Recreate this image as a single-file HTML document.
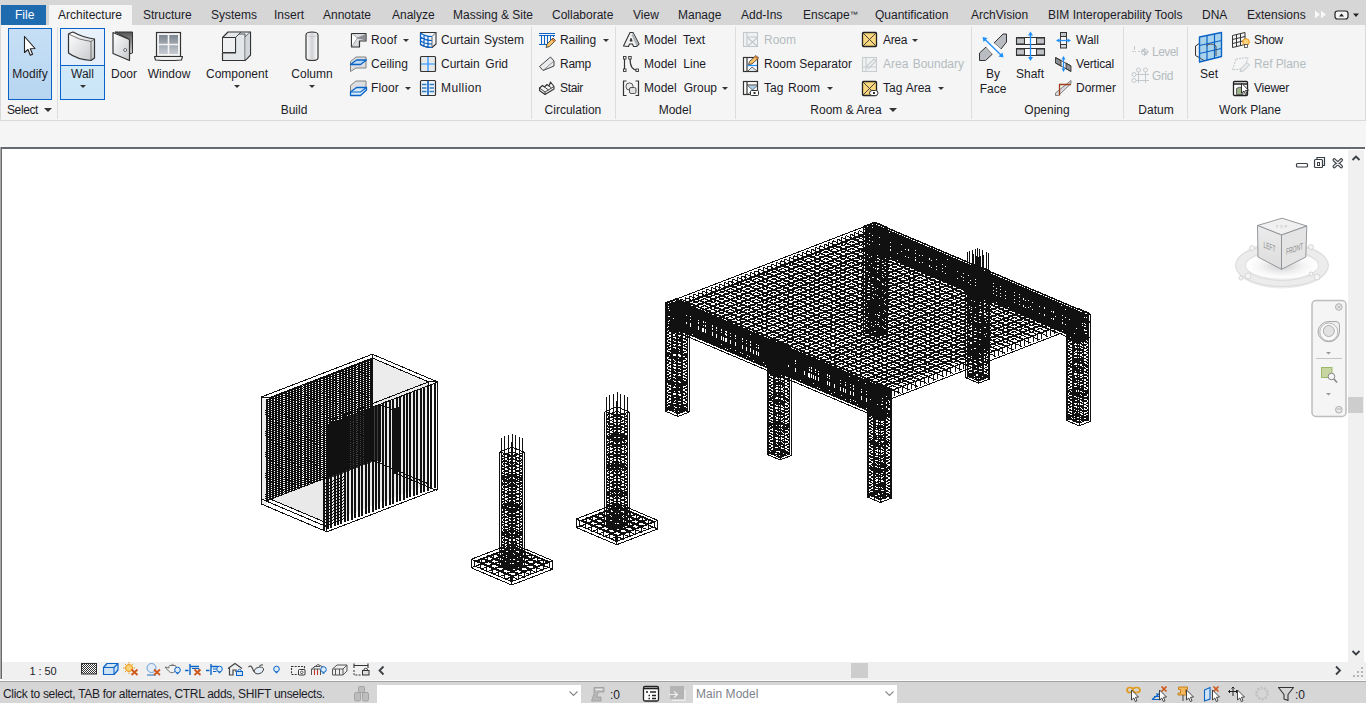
<!DOCTYPE html>
<html><head><meta charset="utf-8"><title>Revit</title>
<style>
*{box-sizing:border-box;margin:0;padding:0}
html,body{width:1366px;height:703px;overflow:hidden}
body{position:relative;background:#f5f5f5;font-family:"Liberation Sans",sans-serif;font-size:12px;color:#1c1c28}
.abs{position:absolute}
#tabs{position:absolute;left:0;top:0;width:1366px;height:25px;background:#d6d6d6}
#tabs span{position:absolute;top:5px;height:20px;line-height:20px;white-space:nowrap}
#ribbon{position:absolute;left:0;top:25px;width:1366px;height:96px;background:#f5f5f5;border-bottom:1px solid #dadada;border-right:1px solid #dadada;border-left:1px solid #dadada}
.t{position:absolute;white-space:nowrap;line-height:14px;height:14px}
.c{text-align:center}
.dis{color:#b4bcc0}
.sep{position:absolute;top:27px;width:1px;height:92px;background:#dddddd}
.arr{position:absolute;width:0;height:0;border-left:3px solid transparent;border-right:3px solid transparent;border-top:3px solid #333}
svg{position:absolute;overflow:visible}
#view{position:absolute;left:0;top:147px;width:1366px;height:533px;background:#fff}
#status{position:absolute;left:0;top:682px;width:1366px;height:21px;background:#d6d6d6}
</style></head><body>
<!--TABS-->
<div id="tabs">
<div class="abs" style="left:1px;top:5px;width:45px;height:20px;background:#1e6bb0"></div>
<div class="abs" style="left:49px;top:5px;width:83px;height:20px;background:#f5f5f5"></div>
<span style="left:15px;color:#fff">File</span>
<span style="left:58px">Architecture</span>
<span style="left:143px">Structure</span>
<span style="left:211px">Systems</span>
<span style="left:274px">Insert</span>
<span style="left:323px">Annotate</span>
<span style="left:392px">Analyze</span>
<span style="left:453px">Massing &amp; Site</span>
<span style="left:552px">Collaborate</span>
<span style="left:633px">View</span>
<span style="left:678px">Manage</span>
<span style="left:741px">Add-Ins</span>
<span style="left:803px">Enscape<span style="position:relative;top:-2px;left:0;height:auto;line-height:1;font-size:8px">™</span></span>
<span style="left:875px">Quantification</span>
<span style="left:971px">ArchVision</span>
<span style="left:1048px">BIM Interoperability Tools</span>
<span style="left:1202px">DNA</span>
<span style="left:1247px">Extensions</span>
</div>
<!--RIBBON-->
<div id="ribbon"></div>
<div class="abs" style="left:8px;top:28px;width:44px;height:72px;border:1px solid #0a64c8;background:linear-gradient(#c6dff5,#b7d5f1)"></div>
<div class="abs" style="left:60px;top:28px;width:45px;height:72px;border:1px solid #0a64c8;background:linear-gradient(#e9f2fb 0,#e3eefa 36px,#0a64c8 36px,#0a64c8 37px,#cfe9f9 37px,#cbe6f8 100%)"></div>
<div class="t " style="left:12.3px;top:67px">Modify</div>
<div class="t " style="left:71.0px;top:67px">Wall</div>
<div class="arr" style="left:80px;top:85px"></div>
<div class="t " style="left:111.0px;top:67px">Door</div>
<div class="t " style="left:147.7px;top:67px">Window</div>
<div class="t " style="left:206.0px;top:67px">Component</div>
<div class="arr" style="left:234px;top:85px"></div>
<div class="t " style="left:291.3px;top:67px">Column</div>
<div class="arr" style="left:309px;top:85px"></div>
<div class="t " style="left:371px;top:33px;letter-spacing:0.16px;">Roof</div>
<div class="arr" style="left:403px;top:39px"></div>
<div class="t " style="left:371px;top:57px;letter-spacing:0.04px;">Ceiling</div>
<div class="t " style="left:371px;top:81px;letter-spacing:0.13px;">Floor</div>
<div class="arr" style="left:405px;top:87px"></div>
<div class="t " style="left:441px;top:33px;word-spacing:0.98px;">Curtain System</div>
<div class="t " style="left:441px;top:57px;word-spacing:2.31px;">Curtain Grid</div>
<div class="t " style="left:441px;top:81px;letter-spacing:0.42px;">Mullion</div>
<div class="sep" style="left:531px"></div>
<div class="t " style="left:560px;top:33px;letter-spacing:-0.10px;">Railing</div>
<div class="arr" style="left:603px;top:39px"></div>
<div class="t " style="left:560px;top:57px;letter-spacing:-0.25px;">Ramp</div>
<div class="t " style="left:560px;top:81px;letter-spacing:-0.33px;">Stair</div>
<div class="t " style="left:544.6px;top:103px">Circulation</div>
<div class="sep" style="left:615px"></div>
<div class="t " style="left:644px;top:33px;word-spacing:3.20px;">Model Text</div>
<div class="t " style="left:644px;top:57px;word-spacing:3.30px;">Model Line</div>
<div class="t " style="left:644px;top:81px;word-spacing:3.64px;">Model Group</div>
<div class="arr" style="left:722px;top:87px"></div>
<div class="t " style="left:658.7px;top:103px">Model</div>
<div class="sep" style="left:735px"></div>
<div class="t dis" style="left:764px;top:33px;letter-spacing:-0.00px;">Room</div>
<div class="t " style="left:764px;top:57px;letter-spacing:-0.00px;">Room Separator</div>
<div class="t " style="left:764px;top:81px;word-spacing:1.31px;">Tag Room</div>
<div class="arr" style="left:827px;top:87px"></div>
<div class="t " style="left:883px;top:33px;letter-spacing:-0.34px;">Area</div>
<div class="arr" style="left:912px;top:39px"></div>
<div class="t dis" style="left:883px;top:57px;word-spacing:0.97px;">Area Boundary</div>
<div class="t " style="left:883px;top:81px;word-spacing:0.64px;">Tag Area</div>
<div class="arr" style="left:938px;top:87px"></div>
<div class="t " style="left:810.3px;top:103px">Room &amp; Area</div>
<div class="arr" style="left:889px;top:108px;border-left-width:4px;border-right-width:4px;border-top-width:4px"></div>
<div class="sep" style="left:971px"></div>
<div class="t " style="left:986.0px;top:67px">By</div>
<div class="t " style="left:979.7px;top:82px">Face</div>
<div class="t " style="left:1016.0px;top:67px">Shaft</div>
<div class="t " style="left:1076px;top:33px;letter-spacing:0.02px;">Wall</div>
<div class="t " style="left:1076px;top:57px;letter-spacing:-0.17px;">Vertical</div>
<div class="t " style="left:1076px;top:81px;letter-spacing:-0.00px;">Dormer</div>
<div class="t " style="left:1024.3px;top:103px">Opening</div>
<div class="sep" style="left:1123px"></div>
<div class="t dis" style="left:1152px;top:45px;letter-spacing:-0.54px;">Level</div>
<div class="t dis" style="left:1152px;top:69px;letter-spacing:-0.42px;">Grid</div>
<div class="t " style="left:1138.3px;top:103px">Datum</div>
<div class="sep" style="left:1187px"></div>
<div class="t " style="left:1200.0px;top:67px">Set</div>
<div class="t " style="left:1254px;top:33px;letter-spacing:-0.25px;">Show</div>
<div class="t dis" style="left:1254px;top:57px;letter-spacing:-0.08px;">Ref Plane</div>
<div class="t " style="left:1254px;top:81px;letter-spacing:-0.24px;">Viewer</div>
<div class="t " style="left:1219.1px;top:103px">Work Plane</div>
<div class="t " style="left:7px;top:103px;letter-spacing:-0.39px;">Select</div>
<div class="arr" style="left:44px;top:108px;border-left-width:4px;border-right-width:4px;border-top-width:4px"></div>
<div class="t " style="left:280.7px;top:103px">Build</div>
<div class="sep" style="left:57px"></div>
<svg width="1366" height="121" viewBox="0 0 1366 121" style="left:0;top:0">
<defs>
<linearGradient id="gv" x1="0" y1="0" x2="0" y2="1"><stop offset="0" stop-color="#fff"/><stop offset="1" stop-color="#c9ccd0"/></linearGradient>
<linearGradient id="gh" x1="0" y1="0" x2="1" y2="0"><stop offset="0" stop-color="#fff"/><stop offset="0.5" stop-color="#d0d2d5"/><stop offset="1" stop-color="#fff"/></linearGradient>
<linearGradient id="gd" x1="0" y1="0" x2="1" y2="1"><stop offset="0" stop-color="#fff"/><stop offset="1" stop-color="#c5c8cc"/></linearGradient>
<linearGradient id="gdark" x1="0" y1="0" x2="0" y2="1"><stop offset="0" stop-color="#555"/><stop offset="1" stop-color="#d8d8d8"/></linearGradient>
<linearGradient id="gwin" x1="0" y1="0" x2="0" y2="1"><stop offset="0" stop-color="#7d8690"/><stop offset="1" stop-color="#c6cbd1"/></linearGradient>
</defs>
<!-- cursor -->
<path d="M24.5 36.5 L24.5 52.5 L28 49.5 L30.3 55.3 L32.6 54.3 L30.3 48.7 L35 48.5 Z" fill="#fff" stroke="#222" stroke-width="1.1" stroke-linejoin="round"/>
<!-- wall -->
<path d="M68.5 34 Q71 32.5 73 32 Q83 37.5 94.5 39 L94.5 58 L91 60.5 Q77 59.5 68.5 53 Z" fill="url(#gd)" stroke="#333" stroke-width="1.2" stroke-linejoin="round"/>
<path d="M68.5 34 Q80 40.5 91 41.5 L91 60.5 M91 41.5 L94.5 39" fill="none" stroke="#555" stroke-width="0.8"/>
<!-- door -->
<path d="M115 32 L132.5 32 L132.5 53 L129 54 L129 39 Z" fill="url(#gdark)" stroke="#333" stroke-width="1"/>
<path d="M113 32.5 L129.5 39.5 L129.5 60.5 L113 53.5 Z" fill="url(#gd)" stroke="#333" stroke-width="1.2" stroke-linejoin="round"/>
<circle cx="125.2" cy="50" r="1.5" fill="#fff" stroke="#444" stroke-width="0.8"/>
<!-- window -->
<rect x="156.5" y="32.5" width="24" height="24" fill="#f4f4f4" stroke="#333" stroke-width="1.2"/>
<rect x="159" y="35" width="19" height="19" fill="url(#gwin)"/>
<path d="M168.5 35 V54 M159 44.5 H178" stroke="#f4f4f4" stroke-width="1.6"/>
<path d="M154.5 56.5 H182.500 L181.5 60 Q168 61 155.5 60 Z" fill="#eee" stroke="#333" stroke-width="1.1" stroke-linejoin="round"/>
<!-- component -->
<path d="M222.500 37.500 L228 32 L250.500 32 L250.500 55 L245 60.500 L222.500 60.500 L222.500 53 L235.500 53 L235.500 37.500 Z" fill="#e4e7ea" stroke="#333" stroke-width="1.2" stroke-linejoin="round"/>
<path d="M222.500 37.500 H235.500 L241 32 M235.500 37.500 L239 34 L245 34 L245 60.500 M245 37 L250.500 32 M222.500 50 H233.500 V37.500" fill="none" stroke="#444" stroke-width="0.9"/>
<rect x="223" y="38" width="12" height="12" fill="#f3f4f5"/>
<path d="M222.500 37.500 H235.500 V52.500 H222.500 Z" fill="#eef0f2" stroke="#333" stroke-width="1"/>
<path d="M245.500 37 L250 32.700 V54.500 L245.500 59.500 Z" fill="#d3d6da"/>
<!-- column -->
<path d="M306 35 Q306 32 312 32 Q318 32 318 35 V58 Q318 60.500 312 60.500 Q306 60.500 306 58 Z" fill="url(#gh)" stroke="#333" stroke-width="1.2"/>
<path d="M306.5 35.500 Q312 38.500 317.500 35.500" fill="none" stroke="#bbb" stroke-width="0.7"/>
<!-- roof -->
<path d="M351.500 33.500 H366 V41 H359.500 V47 H351.500 Z" fill="#d9dbde" stroke="#333" stroke-width="1.2" stroke-linejoin="round"/>
<path d="M351.500 33.500 L357 38 H366 M357 38 L351.500 47" fill="none" stroke="#666" stroke-width="0.8"/>
<path d="M352 34 L357 38 L352 46 Z" fill="#fff"/><path d="M357 38 L365.500 34 V40.500 Z" fill="#8a8e93"/>
<!-- ceiling -->
<path d="M350.500 61.500 L356 57 H366 V68 H356 L350.500 71.500 Z" fill="#dcdee1" stroke="#777" stroke-width="0.9" stroke-linejoin="round"/>
<path d="M350.500 64.500 L356.500 60 H366.500 L360.500 64.500 Z" fill="#bcd9f3" stroke="#0a64c8" stroke-width="1.3" stroke-linejoin="round"/>
<!-- floor -->
<path d="M350.500 85.500 L356 81 H366 V90 L360 95.500 H350.500 Z" fill="#dcdee1" stroke="#777" stroke-width="0.9" stroke-linejoin="round"/>
<path d="M350.500 92 L356.500 87.500 H366.500 V90 L360.500 95.500 H350.500 Z" fill="#d6e9f8" stroke="#0a64c8" stroke-width="1.3" stroke-linejoin="round"/>
<path d="M350.500 92 H360.500 L366.500 87.500" fill="none" stroke="#0a64c8" stroke-width="1.1"/>
<!-- curtain system -->
<path d="M420.500 32.500 H436 V44 L432 47.500 Q425 47.500 420.500 44.500 Z" fill="#f1f4f7" stroke="#333" stroke-width="1.1" stroke-linejoin="round"/>
<path d="M432 36.500 L436 32.500 M432 36.500 V47.500" stroke="#555" stroke-width="0.9" fill="none"/>
<path d="M420.500 33 Q425 36.500 432 36.500 M420.500 37 Q425 40.500 432 40.500 M420.500 41 Q425 44 432 44 M424 34.500 V46.500 M428 36 V47.500 M420.500 33 V44.500 Q425 47.500 432 47.500" stroke="#0a64c8" stroke-width="1.2" fill="none"/>
<!-- curtain grid -->
<rect x="420.500" y="56.500" width="15" height="15" rx="1" fill="#e6e8ea" stroke="#333" stroke-width="1.2"/>
<path d="M428 57 V71 M421 64 H435" stroke="#1e90ff" stroke-width="1.2"/>
<!-- mullion -->
<rect x="420.500" y="80.500" width="15" height="15" rx="1" fill="#eef1f4" stroke="#333" stroke-width="1.2"/>
<path d="M428 81 V95" stroke="#0a64c8" stroke-width="1.6"/><path d="M422 84.500 H426.500 M429.500 84.500 H434 M422 88 H426.500 M429.500 88 H434 M422 91.500 H426.500 M429.500 91.500 H434" stroke="#2b7fc4" stroke-width="1.5"/>
<!-- railing -->
<path d="M539 33.500 H555 M539 35.500 H555 M539 44.500 H549 M541.500 35.500 V44.500 M544.500 35.500 V44.500 M547.500 35.500 V44.500 M550.500 35.500 V40 M553.500 35.500 V37" stroke="#0a64c8" stroke-width="1" fill="none"/>
<path d="M546 47.500 L547 44 L553 38 L555.500 40.500 L549.500 46.500 Z" fill="#f6c36a" stroke="#333" stroke-width="0.800" stroke-linejoin="round"/>
<path d="M552 39 L554.500 41.500" stroke="#d2691e" stroke-width="1.300"/>
<!-- ramp -->
<path d="M539.500 66.500 L550.500 57 L554 61 V66 L543 70.500 Z" fill="#e9ebed" stroke="#444" stroke-width="1" stroke-linejoin="round"/>
<path d="M543 70.500 L554 61" stroke="#777" stroke-width="0.8"/>
<!-- stair -->
<path d="M539.500 88 L542.500 85.500 L544.500 87 L547 84.500 L549 86 L550.500 82 L554 86.500 V89 L545 94.500 L539.500 90.500 Z" fill="#f4f4f5" stroke="#333" stroke-width="1.100" stroke-linejoin="round"/>
<path d="M539.500 88 L545 92 L554 86.500 M545 92 V94.500 M544.500 87 L548.500 90 M549 86 L551.500 88" stroke="#333" stroke-width="0.900" fill="none"/>
<!-- model text -->
<path d="M623.500 46 L630 32.500 H633 L639 44 L636.500 46.500 H633.500 L632.500 44 H629.500 L628.500 46.500 Z M630.200 41 H632 L631 38.500 Z" fill="#f3f3f3" stroke="#333" stroke-width="1.1" stroke-linejoin="round" fill-rule="evenodd"/>
<path d="M633 33 L638.500 44 L636.500 46 L631.500 35 Z" fill="#aeb3b8"/>
<!-- model line -->
<path d="M624.500 58 V70 M630 58 Q630 70 637 70" stroke="#333" stroke-width="1.2" fill="none"/>
<g fill="#fff" stroke="#333" stroke-width="0.9"><rect x="623.500" y="56.500" width="2.500" height="2.500"/><rect x="623.500" y="69" width="2.500" height="2.500"/><rect x="628.700" y="56.500" width="2.500" height="2.500"/><rect x="636" y="69" width="2.500" height="2.500"/></g>
<!-- model group -->
<path d="M626.500 81 H623.500 V95.500 H626.500 M635.500 81 H638.500 V95.500 H635.500" stroke="#333" stroke-width="1.2" fill="none"/>
<circle cx="629.500" cy="86.500" r="3.600" fill="#ececec" stroke="#444" stroke-width="0.9"/>
<rect x="629.500" y="87.500" width="6.500" height="6" rx="1.500" fill="#e2e2e2" stroke="#444" stroke-width="0.9"/>
<!-- room (disabled) -->
<g stroke="#c3c8cc" fill="none" stroke-width="1.1"><rect x="743.500" y="32.500" width="14" height="14" fill="#f0f1f2"/><path d="M747 33 V46 M747 37 H757.500 M748 38 L757 46 M757 38 L748 46"/></g>
<!-- room separator -->
<rect x="743.500" y="57.500" width="14" height="14" fill="#fff" stroke="#333" stroke-width="1.2"/>
<path d="M747 58 V71" stroke="#333" stroke-width="1.2"/><path d="M747.500 65.500 H757" stroke="#1e90ff" stroke-width="1.3"/>
<path d="M748 71 L752 67 L757 71" fill="#dfe6ec" stroke="#444" stroke-width="0.8"/>
<path d="M748.500 64.500 L749.500 61.500 L756 55.500 L758.500 58 L752 64 Z" fill="#f6c36a" stroke="#333" stroke-width="0.8" stroke-linejoin="round"/><path d="M755.300 56.500 L757.700 59" stroke="#d2691e" stroke-width="1.2"/>
<!-- tag room -->
<rect x="743.500" y="81.500" width="14" height="13" fill="#fff" stroke="#333" stroke-width="1.2"/>
<path d="M747 82 V94 M747 85 H757" stroke="#333" stroke-width="1.2"/><path d="M748 86 H757 L752.500 90.500 Z" fill="#a8d0ee"/><path d="M748 86 L757 94 M757 86 L748 94" stroke="#555" stroke-width="0.7"/>
<rect x="750.500" y="90.500" width="8" height="5" rx="1" fill="#fff" stroke="#333" stroke-width="1"/><rect x="753.500" y="92" width="2" height="2" fill="#333"/>
<!-- area -->
<rect x="862.500" y="32.500" width="14" height="14" rx="1" fill="#f9d77e" stroke="#222" stroke-width="1.3"/><path d="M863 33 L876 46 M876 33 L863 46" stroke="#333" stroke-width="0.9"/>
<!-- area boundary disabled -->
<g stroke="#c9cdd0" fill="none" stroke-width="1.1"><rect x="862.500" y="57.500" width="14" height="14" fill="#f0f1f2"/><path d="M866 58 V71 M863 67 H876 M866 67 L874 59 L876 61 L868 69"/></g>
<!-- tag area -->
<rect x="862.500" y="81.500" width="14" height="14" rx="1" fill="#f9d77e" stroke="#222" stroke-width="1.3"/><path d="M863 82 L876 95 M876 82 L863 95" stroke="#333" stroke-width="0.9"/>
<rect x="869.500" y="90.500" width="8.500" height="5" rx="2.500" fill="#fff" stroke="#333" stroke-width="1"/><rect x="873" y="92" width="2" height="2" fill="#333"/>
<!-- by face -->
<path d="M994 43 L1003 34 H1006.500 V42 L1001 49 Z" fill="#b9bcc0" stroke="#333" stroke-width="1"/>
<path d="M979.500 53 L986 47 L992.500 54 L985.500 60.500 H979.500 Z" fill="#b9bcc0" stroke="#333" stroke-width="1"/>
<path d="M986 47 L994 43 L1001 49 L992.500 54 Z" fill="#fff"/>
<path d="M984 38.500 L1002 56" stroke="#1e90ff" stroke-width="1.3"/><path d="M982.500 37 L987.500 38 L983.500 42 Z M1003.500 57.500 L998.500 56.500 L1002.500 52.500 Z" fill="#1e90ff"/>
<!-- shaft -->
<g fill="#bfc2c6" stroke="#333" stroke-width="1.1"><rect x="1016.500" y="38" width="8" height="6"/><rect x="1036.500" y="38" width="8" height="6"/><rect x="1016.500" y="49" width="8" height="6"/><rect x="1036.500" y="49" width="8" height="6"/></g>
<path d="M1016 37.500 H1045 M1016 44.500 H1045 M1016 48.500 H1045 M1016 55.500 H1045" stroke="#333" stroke-width="1.1"/>
<rect x="1025" y="38.200" width="11" height="5.600" fill="#fff"/><rect x="1025" y="49.200" width="11" height="5.600" fill="#fff"/>
<path d="M1030.500 34 V59" stroke="#1e90ff" stroke-width="1.3"/><path d="M1030.500 31.500 L1033 35.500 H1028 Z M1030.500 61 L1033 57 H1028 Z" fill="#1e90ff"/>
<!-- wall opening -->
<rect x="1060.500" y="32.500" width="6" height="4" fill="#bfc2c6" stroke="#333" stroke-width="1"/><rect x="1060.500" y="44.500" width="6" height="3.500" fill="#d5d7da" stroke="#333" stroke-width="1"/>
<path d="M1060.500 36 V45 M1066.500 36 V45" stroke="#333" stroke-width="0.9"/>
<path d="M1058 40.500 H1069" stroke="#1e90ff" stroke-width="1.2"/><path d="M1056 40.500 L1059.500 38.500 V42.500 Z M1071 40.500 L1067.500 38.500 V42.500 Z" fill="#1e90ff"/>
<!-- vertical -->
<path d="M1055.500 57.500 L1061 60.500 V66 L1055.500 63 Z M1066 63 L1071 66 V71.500 L1066 68.500 Z" fill="#8d9196" stroke="#333" stroke-width="0.9"/>
<path d="M1055.500 57.500 L1071 66 M1055.500 63 L1071 71.500" stroke="#333" stroke-width="0.9"/>
<path d="M1063.500 59 V69" stroke="#1e90ff" stroke-width="1.200"/><path d="M1063.500 56 L1065.500 59.500 H1061.500 Z M1063.500 72 L1065.500 68.500 H1061.500 Z" fill="#1e90ff"/>
<!-- dormer -->
<path d="M1055.500 93 L1071 80.500 V83.500 L1058.500 95.500 H1055.500 Z" fill="#d8dadd" stroke="#666" stroke-width="0.8"/>
<path d="M1059.500 95.500 V84.500 H1071" stroke="#a0401a" stroke-width="1.300" fill="none"/>
<!-- level disabled -->
<g stroke="#c3c8cc" fill="none" stroke-width="1"><path d="M1132 51.500 H1136 M1138 51.500 H1150" stroke-dasharray="2 1"/><circle cx="1144.500" cy="52" r="3"/><path d="M1144.500 48 V56 M1134.500 46 V50"/></g>
<path d="M1141.500 52 A3 3 0 0 1 1144.500 49 V52 Z M1147.500 52 A3 3 0 0 1 1144.500 55 V52 Z" fill="#c3c8cc"/>
<!-- grid disabled -->
<g stroke="#c3c8cc" fill="none" stroke-width="1"><path d="M1138.500 72 V83 M1145.500 72 V83 M1136 74.500 H1149 M1136 80.500 H1149"/><circle cx="1138.500" cy="70" r="2"/><circle cx="1145.500" cy="70" r="2"/><circle cx="1134" cy="74.500" r="2"/><circle cx="1134" cy="80.500" r="2"/></g>
<!-- set -->
<path d="M1195.500 46 L1200 43 V58 L1195.500 55.500 Z" fill="#f0f0f0" stroke="#333" stroke-width="1"/>
<path d="M1199.500 37 L1221.500 32.500 V56.500 L1199.500 62 Z" fill="#a9d3ea" stroke="#0a64c8" stroke-width="1.400" stroke-linejoin="round"/>
<path d="M1199.500 45.500 L1221.500 40.500 M1199.500 53.500 L1221.500 48.500 M1207 35.500 V60 M1214.500 34 V58.500" stroke="#0a64c8" stroke-width="1.200"/>
<path d="M1200 58 L1204 60.500 M1206 46 Q1211 42 1216 46 V56" stroke="#444" stroke-width="0.9" fill="none"/>
<!-- show -->
<path d="M1232.500 35.500 L1245 32.500 V44.500 L1232.500 47.500 Z M1232.500 39.500 L1245 36.500 M1232.500 43.500 L1245 40.500 M1236.500 34.500 V46.500 M1240.500 33.500 V45.500" stroke="#333" stroke-width="1" fill="#f4f4f4"/>
<circle cx="1246" cy="42" r="3.300" fill="#fbd27a" stroke="#e8960c" stroke-width="1"/><rect x="1244.500" y="44.500" width="3" height="3" fill="#fff" stroke="#444" stroke-width="0.800"/>
<!-- ref plane disabled -->
<g stroke="#c3c8cc" fill="none" stroke-width="1"><path d="M1236 59 L1248 57.500 L1244.500 68.500 L1232.500 70 Z" stroke-dasharray="2 1"/><path d="M1240 71.500 L1241 68.500 L1247 62.500 L1249.500 65 L1243.500 71 Z" fill="#e8eaec"/></g>
<!-- viewer -->
<rect x="1233.500" y="81.500" width="14" height="14" rx="1" fill="#fff" stroke="#222" stroke-width="1.300"/><path d="M1234 84 H1247" stroke="#222" stroke-width="1.500"/>
<path d="M1236.500 88.500 Q1239 86.500 1243 87.500 V94.500 H1236.500 Z" fill="#9fb38b" stroke="#444" stroke-width="0.800"/>
<path d="M1241.500 83 V93 L1244 91 L1245.500 94.500 L1247 94 L1245.500 90.500 L1248.500 90.300 Z" fill="#fff" stroke="#222" stroke-width="0.900" stroke-linejoin="round"/>
<!-- tab extras -->
<path d="M1315 10.500 L1320 14.500 L1315 18.500 Z M1321 10.500 L1326 14.500 L1321 18.500 Z" fill="#f8f8f8"/>
<rect x="1335" y="11" width="13" height="8" rx="2.500" fill="#f3f3f3" stroke="#222" stroke-width="1.200"/><path d="M1339 16.500 L1341.500 13.500 L1344 16.500 Z" fill="#222"/>
<path d="M1353 13.500 H1359 L1356 17 Z" fill="#222"/>
</svg>

<!--VIEW-->
<div id="view"></div>
<div class="abs" style="left:0;top:147px;width:1365px;height:2px;background:#666a6e"></div>
<div class="abs" style="left:0;top:147px;width:1px;height:532px;background:#a8a8a8"></div><div class="abs" style="left:1px;top:147px;width:1px;height:532px;background:#666a6e"></div>
<div class="abs" style="left:1348px;top:150px;width:16px;height:512px;background:#f0f0f0"></div>
<div class="abs" style="left:1348px;top:397px;width:15px;height:16px;background:#cdcdcd"></div>
<div class="abs" style="left:2px;top:662px;width:1364px;height:18px;background:#f0f0f0"></div><div class="abs" style="left:0;top:680px;width:1366px;height:1px;background:#fcfcfc"></div>
<div class="abs" style="left:851px;top:663px;width:17px;height:15px;background:#cdcdcd"></div>
<div class="abs" style="left:0;top:681px;width:1366px;height:1px;background:#a2a2a2"></div>
<div class="t" style="left:29.5px;top:664px;font-size:11px;letter-spacing:-0.1px">1 : 50</div>
<svg width="1366" height="703" viewBox="0 0 1366 703" style="left:0;top:0;pointer-events:none">
<defs>
<pattern id="chk" width="2" height="2" patternUnits="userSpaceOnUse"><rect width="1" height="1" fill="#333"/><rect x="1" y="1" width="1" height="1" fill="#333"/></pattern>
<linearGradient id="cubeL" x1="0" y1="0" x2="0" y2="1"><stop offset="0" stop-color="#ececec"/><stop offset="1" stop-color="#dcdcdc"/></linearGradient>
<radialGradient id="shadow"><stop offset="0" stop-color="#c8c8c8"/><stop offset="1" stop-color="#fff" stop-opacity="0"/></radialGradient>
</defs>
<!-- window controls -->
<rect x="1296.500" y="163.500" width="11" height="3.500" rx="1" fill="#fff" stroke="#3a3f45" stroke-width="1.200"/>
<path d="M1317 159.500 V157.500 H1324.500 V165.500 H1322.500" fill="none" stroke="#3a3f45" stroke-width="1.200"/>
<rect x="1314.500" y="159.500" width="8" height="8" rx="1" fill="#fff" stroke="#3a3f45" stroke-width="1.200"/><rect x="1317.500" y="162.500" width="2" height="3" fill="none" stroke="#3a3f45" stroke-width="1"/>
<path d="M1334.300 160 L1341.200 166.500 M1341.200 160 L1334.300 166.500" stroke="#3a3f45" stroke-width="3.600" stroke-linecap="round"/>
<path d="M1334.300 160 L1341.200 166.500 M1341.200 160 L1334.300 166.500" stroke="#e8e8e8" stroke-width="1.400" stroke-linecap="round"/>
<!-- scroll arrows -->
<path d="M1352.500 160 L1356 156.500 L1359.500 160" fill="none" stroke="#3a3f45" stroke-width="1.800"/>
<path d="M1352.500 651 L1356 654.500 L1359.500 651" fill="none" stroke="#3a3f45" stroke-width="1.800"/>
<path d="M383.500 666.500 L379.500 670.500 L383.500 674.500" fill="none" stroke="#3a3f45" stroke-width="1.800"/>
<path d="M1336 666.500 L1340 670.500 L1336 674.500" fill="none" stroke="#3a3f45" stroke-width="1.800"/>
<g fill="#b5b5b5"><rect x="1361" y="667" width="2" height="2"/><rect x="1361" y="671" width="2" height="2"/><rect x="1361" y="675" width="2" height="2"/><rect x="1357" y="671" width="2" height="2"/><rect x="1357" y="675" width="2" height="2"/><rect x="1353" y="675" width="2" height="2"/></g>
<!-- viewcube -->
<ellipse cx="1282" cy="266" rx="40" ry="15" fill="url(#shadow)"/>
<ellipse cx="1282" cy="265.500" rx="41.500" ry="18" fill="none" stroke="#ececec" stroke-width="10"/>
<ellipse cx="1282" cy="265.500" rx="46.500" ry="21" fill="none" stroke="#d4d4d4" stroke-width="0.800"/>
<ellipse cx="1282" cy="265.500" rx="36.500" ry="15" fill="none" stroke="#d8d8d8" stroke-width="0.800"/>
<path d="M1257.500 225.500 L1282 218.200 L1306.800 226 L1281.500 235 Z" fill="#f0f0f0" stroke="#8a8e94" stroke-width="0.900" stroke-linejoin="round"/>
<path d="M1257.500 225.500 L1281.500 235 L1281.500 269.300 L1258 257 Z" fill="url(#cubeL)" stroke="#8a8e94" stroke-width="0.900" stroke-linejoin="round"/>
<path d="M1306.800 226 L1281.500 235 L1281.500 269.300 L1305.800 257 Z" fill="#e4e4e4" stroke="#8a8e94" stroke-width="0.900" stroke-linejoin="round"/>
<text x="0" y="0" font-family="Liberation Sans, sans-serif" font-size="9" fill="#8c8c8c" transform="matrix(1 0.384 0 1 1263.500 247.500)" textLength="12" lengthAdjust="spacingAndGlyphs">LEFT</text>
<text x="0" y="0" font-family="Liberation Sans, sans-serif" font-size="9" fill="#8c8c8c" transform="matrix(1 -0.352 0 1 1286 255)" textLength="17" lengthAdjust="spacingAndGlyphs">FRONT</text>
<text x="1276" y="228" font-family="Liberation Sans, sans-serif" font-size="3.500" fill="#aaa" textLength="11">TOP</text>
<g fill="#f4f4f4" stroke="#ccc" stroke-width="0.700"><circle cx="1252" cy="248" r="2.500"/><circle cx="1311" cy="247" r="2.500"/><circle cx="1248" cy="276" r="3"/><circle cx="1317" cy="277" r="3"/><circle cx="1241" cy="278" r="2"/><circle cx="1311" cy="274" r="2"/></g>
<!-- navbar -->
<rect x="1312" y="300.500" width="34" height="116" rx="4" fill="#f5f5f5" stroke="#bdbdbd" stroke-width="1.500"/>
<circle cx="1338.800" cy="307" r="3.300" fill="#e8e8e8" stroke="#b0b0b0" stroke-width="1"/><path d="M1337.300 305.500 L1340.300 308.500 M1340.300 305.500 L1337.300 308.500" stroke="#aaa" stroke-width="0.800"/>
<path d="M1318 332 A10.800 10.800 0 0 1 1328.800 321.500 H1336 Q1339.500 321.500 1339.500 325 V332 A10.800 10.800 0 0 1 1318 332 Z" fill="#efefef" stroke="#a8a8a8" stroke-width="1"/>
<circle cx="1328.800" cy="332" r="9" fill="#f8f8f8" stroke="#b0b0b0" stroke-width="0.900"/>
<circle cx="1328.800" cy="331" r="5.500" fill="#e2e2e2" stroke="#a8a8a8" stroke-width="0.900"/>
<path d="M1326 352 H1331 L1328.500 354.500 Z M1326 393 H1331 L1328.500 395.500 Z" fill="#999"/>
<path d="M1316 358.500 H1342" stroke="#c4c4c4" stroke-width="1"/>
<rect x="1321.500" y="367.500" width="10.500" height="10" fill="#c5d6a0" stroke="#9db86a" stroke-width="1"/>
<circle cx="1331.500" cy="376.500" r="3.300" fill="#f4f4f4" stroke="#888" stroke-width="1"/><path d="M1334 379 L1337 382.500" stroke="#888" stroke-width="1.600"/>
<circle cx="1338.800" cy="409.700" r="3.300" fill="#e8e8e8" stroke="#b0b0b0" stroke-width="1"/><path d="M1336.500 409 H1341" stroke="#aaa" stroke-width="0.800"/>
<!-- view control bar icons -->
<rect x="81.500" y="663.500" width="15" height="10.500" fill="#fff" stroke="#333" stroke-width="1"/><rect x="82" y="664" width="14" height="10" fill="url(#chk)"/>
<path d="M103.500 667.500 L107 663.500 H118 V670 L114 674.500 H103.500 Z" fill="#cfe3f5" stroke="#0a64c8" stroke-width="1.200" stroke-linejoin="round"/><path d="M103.500 667.500 H114 V674.500 M114 667.500 L118 663.500" fill="none" stroke="#0a64c8" stroke-width="1.100"/>
<circle cx="129" cy="668" r="3.500" fill="#fbd27a" stroke="#e8960c" stroke-width="1"/><path d="M129 662 V663.500 M129 672.500 V674 M123 668 H124.500 M133.500 668 H135 M124.800 663.800 L125.800 664.800 M133.200 663.800 L132.200 664.800 M124.800 672.200 L125.800 671.200" stroke="#e8960c" stroke-width="1"/>
<path d="M131.500 669.500 L137.500 675 M137.500 669.500 L131.500 675" stroke="#d0581a" stroke-width="1.800"/>
<circle cx="151.500" cy="668" r="4.500" fill="#e4eef8" stroke="#6a9fd4" stroke-width="1"/><path d="M147 675 H156" stroke="#6a9fd4" stroke-width="1.600"/>
<path d="M154 669.500 L160 675 M160 669.500 L154 675" stroke="#d0581a" stroke-width="1.800"/>
<path d="M165 667 L168.500 671 Q172 674.500 175.500 671 Q177.500 668 175.500 665.500 H169.500 Q168.500 666.500 169 668 Z M171 665.500 Q172.500 663 174 665.500" fill="#f2f2f2" stroke="#666" stroke-width="0.900"/>
<circle cx="177.500" cy="670" r="2.800" fill="#dcecfb" stroke="#0a64c8" stroke-width="1"/><path d="M176.500 673.500 H178.500" stroke="#0a64c8" stroke-width="1.400"/>
<path d="M185 670.500 H188.500 M190 675 V666.500 H199 M190 666.500 V664" stroke="#0a64c8" stroke-width="1.400" fill="none"/><path d="M192 668.500 H199 V672" stroke="#0a64c8" stroke-width="1" fill="none"/>
<path d="M194.500 669.500 L200.500 675 M200.500 669.500 L194.500 675" stroke="#d0581a" stroke-width="1.800"/>
<path d="M206 670.500 H209.500 M211 675 V666.500 H218 M211 666.500 V664" stroke="#0a64c8" stroke-width="1.400" fill="none"/><path d="M213 669 H216.500 M213 671.500 H216.500" stroke="#0a64c8" stroke-width="1"/>
<circle cx="219.500" cy="669" r="2.800" fill="#dcecfb" stroke="#0a64c8" stroke-width="1"/><path d="M218.500 672.500 H220.500" stroke="#0a64c8" stroke-width="1.400"/>
<path d="M228 668.500 L235 663.500 L242 668.500 M229.500 668 V675 H233 V670 H236 V672" fill="none" stroke="#444" stroke-width="1.200"/>
<rect x="236.500" y="671.500" width="6" height="4" fill="#cfe3f5" stroke="#0a64c8" stroke-width="1"/><path d="M238 671.500 V670 Q239.500 668.500 241 670 V671.500" fill="none" stroke="#0a64c8" stroke-width="0.900"/>
<path d="M248.500 667 Q251 664.500 252.500 668.500 Q254 672.500 256 672.500" fill="none" stroke="#444" stroke-width="1.100"/>
<path d="M254 671 Q255 667.500 259.500 667 Q264 667 263.500 670 Q262.500 673.500 258 674 Q254.500 674 254 671 Z" fill="#e4eef8" stroke="#444" stroke-width="1"/><path d="M259 666.500 Q261 664 263 665" fill="none" stroke="#444" stroke-width="1"/>
<circle cx="276.500" cy="669" r="2.800" fill="#dcecfb" stroke="#0a64c8" stroke-width="1"/><path d="M275.500 672.500 H277.500" stroke="#0a64c8" stroke-width="1.400"/>
<path d="M291.500 666.500 H304.500 V674.500 H291.500 Z" fill="none" stroke="#333" stroke-width="1.100" stroke-dasharray="2 1.200"/><rect x="298.500" y="669.500" width="6.500" height="5.500" rx="1" fill="#fff" stroke="#333" stroke-width="1"/><circle cx="301.800" cy="672.300" r="1.300" fill="none" stroke="#333" stroke-width="0.800"/>
<path d="M311.500 675 V669 L318 664.500 L324 667.500 M311.500 669 H320 M314.500 669 V675 M317.500 669 V675 M320.500 669 V675 M314 666.500 L320 666.500" fill="none" stroke="#555" stroke-width="1"/><path d="M314.500 670 V675 M317.500 670 V675" stroke="#c0392b" stroke-width="1.100"/>
<circle cx="323.500" cy="669.500" r="2.800" fill="#dcecfb" stroke="#0a64c8" stroke-width="1"/><path d="M322.500 673 H324.500" stroke="#0a64c8" stroke-width="1.400"/>
<path d="M332.500 669 L337 665 H347 V671 L343 675 H332.500 Z M332.500 669 H343 V675 M343 669 L347 665 M335.500 669 V675 M339.500 669 V675" fill="#eee" stroke="#555" stroke-width="1"/>
<path d="M354 663.500 V668 M368 663.500 V668 M354 665.500 H368" stroke="#333" stroke-width="1.100" fill="none"/><path d="M354 670 V675 H361" stroke="#333" stroke-width="1" stroke-dasharray="2 1.200" fill="none"/>
<rect x="362.500" y="670.500" width="6.500" height="4.500" fill="#ddd" stroke="#333" stroke-width="1"/><path d="M364 670.500 V669 Q365.700 667.500 367.500 669 V670.500" fill="none" stroke="#333" stroke-width="0.900"/>
</svg>

<svg width="1366" height="703" viewBox="0 0 1366 703" style="left:0;top:0" shape-rendering="crispEdges">
<path d="M270.7 499.2L327.0 523.1L428.6 483.9L372.3 460.0Z" fill="#e9e9e9"/>
<path d="M372.3 358.0L428.6 381.9L428.6 483.9L372.3 460.0Z" fill="#ececec"/>
<path d="M262 398L266.500 400V506L262 504Z" fill="#ececec"/>
<path d="M261.4 397.0L372.3 354.2L437.8 382.0L437.8 489.0L326.9 531.8L261.4 504.0ZM270.7 397.2L372.3 358.0M372.3 358.0L428.6 381.9M372.3 354.2L372.3 358.0M437.8 382.0L428.6 381.9M261.4 397.0L270.7 397.2M326.9 424.8L437.8 382.0M327.0 421.1L428.6 381.9M372.3 358.0L372.3 460.0M428.6 381.9L428.6 483.9M261.4 504.0L261.4 397.0M326.9 531.8L326.9 424.8M270.7 499.2L372.3 460.0M372.3 460.0L428.6 483.9M270.7 499.2L331.6 525.0M261.4 499.0L326.9 526.8M270.7 499.2L270.7 397.2" fill="none" stroke="#111" stroke-width="1"/>
<path d="M266.5 398.9L266.5 500.9M269.7 397.7L269.7 499.7M272.8 396.4L272.8 498.4M276.0 395.2L276.0 497.2M279.2 394.0L279.2 496.0M282.4 392.8L282.4 494.8M285.5 391.6L285.5 493.6M288.7 390.3L288.7 492.3M291.9 389.1L291.9 491.1M295.0 387.9L295.0 489.9M298.2 386.7L298.2 488.7M301.4 385.4L301.4 487.4M304.6 384.2L304.6 486.2M307.7 383.0L307.7 485.0M310.9 381.8L310.9 483.8M314.1 380.5L314.1 482.5M317.3 379.3L317.3 481.3M320.4 378.1L320.4 480.1M323.6 376.9L323.6 478.9M326.8 375.6L326.8 477.6M329.9 374.4L329.9 476.4M333.1 373.2L333.1 475.2M336.3 372.0L336.3 474.0M339.5 370.7L339.5 472.7M342.6 369.5L342.6 471.5M345.8 368.3L345.8 470.3M349.0 367.1L349.0 469.1M352.1 365.8L352.1 467.8M355.3 364.6L355.3 466.6M358.5 363.4L358.5 465.4M361.7 362.2L361.7 464.2M364.8 361.0L364.8 463.0M368.0 359.7L368.0 461.7M371.2 358.5L371.2 460.5" fill="none" stroke="#111" stroke-width="2"/>
<path d="M265.6 400.3L372.8 358.9M265.6 402.4L372.8 361.0M265.6 404.5L372.8 363.1M265.6 406.6L372.8 365.2M265.6 408.7L372.8 367.3M265.6 410.8L372.8 369.4M265.6 412.9L372.8 371.5M265.6 415.0L372.8 373.6M265.6 417.1L372.8 375.7M265.6 419.2L372.8 377.8M265.6 421.3L372.8 379.9M265.6 423.4L372.8 382.0M265.6 425.5L372.8 384.1M265.6 427.6L372.8 386.2M265.6 429.7L372.8 388.3M265.6 431.8L372.8 390.4M265.6 433.9L372.8 392.5M265.6 436.0L372.8 394.6M265.6 438.1L372.8 396.7M265.6 440.2L372.8 398.8M265.6 442.3L372.8 400.9M265.6 444.4L372.8 403.0M265.6 446.5L372.8 405.1M265.6 448.6L372.8 407.2M265.6 450.7L372.8 409.3M265.6 452.8L372.8 411.4M265.6 454.9L372.8 413.5M265.6 457.0L372.8 415.6M265.6 459.1L372.8 417.7M265.6 461.2L372.8 419.8M265.6 463.3L372.8 421.9M265.6 465.4L372.8 424.0M265.6 467.5L372.8 426.1M265.6 469.6L372.8 428.2M265.6 471.7L372.8 430.3M265.6 473.8L372.8 432.4M265.6 475.9L372.8 434.5M265.6 478.0L372.8 436.6M265.6 480.1L372.8 438.7M265.6 482.2L372.8 440.8M265.6 484.3L372.8 442.9M265.6 486.4L372.8 445.0M265.6 488.5L372.8 447.1M265.6 490.6L372.8 449.2M265.6 492.7L372.8 451.3M265.6 494.8L372.8 453.4M265.6 496.9L372.8 455.5M265.6 499.0L372.8 457.6M265.6 501.1L372.8 459.7" fill="none" stroke="#111" stroke-width="1"/>
<path d="M324.1 425.4L324.1 530.4M327.6 424.1L327.6 529.1M331.0 422.8L331.0 527.8M334.5 421.4L334.5 526.4M337.9 420.1L337.9 525.1M341.4 418.8L341.4 523.8M344.8 417.4L344.8 522.4M348.3 416.1L348.3 521.1M351.7 414.8L351.7 519.8M355.2 413.4L355.2 518.4M358.7 412.1L358.7 517.1M362.1 410.8L362.1 515.8M365.6 409.4L365.6 514.4M369.0 408.1L369.0 513.1M372.5 406.8L372.5 511.8M375.9 405.4L375.9 510.4M379.4 404.1L379.4 509.1M382.8 402.8L382.8 507.8M386.3 401.4L386.3 506.4M389.7 400.1L389.7 505.1M393.2 398.8L393.2 503.8M396.6 397.4L396.6 502.4M400.1 396.1L400.1 501.1M403.5 394.8L403.5 499.8M407.0 393.4L407.0 498.4M410.4 392.1L410.4 497.1M413.9 390.8L413.9 495.8M417.3 389.5L417.3 494.5M420.8 388.1L420.8 493.1M424.2 386.8L424.2 491.8M427.7 385.5L427.7 490.5M431.1 384.1L431.1 489.1M434.6 382.8L434.6 487.8" fill="none" stroke="#111" stroke-width="2"/>
<path d="M325.1 484.1L349.3 474.7M325.1 487.1L349.3 477.7M325.1 490.1L349.3 480.7M325.1 493.1L349.3 483.7M325.1 496.1L349.3 486.7M325.1 499.1L349.3 489.7M325.1 502.1L349.3 492.7M325.1 505.1L349.3 495.7M325.1 508.1L349.3 498.7M325.1 511.1L349.3 501.7M325.1 514.1L349.3 504.7M325.1 517.1L349.3 507.7M325.1 520.1L349.3 510.7M325.1 523.1L349.3 513.7M325.1 526.1L349.3 516.7" fill="none" stroke="#111" stroke-width="1" stroke-dasharray="2 1"/>
<path d="M326.0 425.5L381.0 404.5L381.0 461.0L372.0 462.0L326.0 480.0Z" fill="#111" fill-opacity="0.8"/>
<path d="M380 405V462M394.500 408V473M398.500 407V472" stroke="#111" stroke-width="2.2" fill="none"/>
<path d="M394.500 473L437 490.500M381 405L399 412" stroke="#111" stroke-width="1" fill="none"/>
<path d="M665 311.5L880.3 403M880.3 403L1090.2 322M1090.2 322L874.9 230.5M874.9 230.5L665 311.5M665 303.5L880.3 395M880.3 395L1090.2 314M1090.2 314L874.9 222.5M874.9 222.5L665 303.5M665 311.5L665 303.5M880.3 403L880.3 395M1090.2 322L1090.2 314M874.9 230.5L874.9 222.5M673.3 307.3L881.4 227M677.6 309.1L885.6 228.8M681.8 310.9L889.9 230.6M686.1 312.7L894.2 232.4M690.4 314.5L898.5 234.3M694.7 316.4L902.7 236.1M699 318.2L907 237.9M703.2 320L911.3 239.7M707.5 321.8L915.6 241.5M711.8 323.6L919.9 243.4M716.1 325.4L924.1 245.2M720.4 327.3L928.4 247M724.6 329.1L932.7 248.8M728.9 330.9L937 250.6M733.2 332.7L941.2 252.4M737.5 334.5L945.5 254.3M741.7 336.4L949.8 256.1M746 338.2L954.1 257.9M750.3 340L958.4 259.7M754.6 341.8L962.6 261.5M758.9 343.6L966.9 263.4M763.1 345.4L971.2 265.2M767.4 347.3L975.5 267M771.7 349.1L979.7 268.8M776 350.9L984 270.6M780.2 352.7L988.3 272.4M784.5 354.5L992.6 274.3M788.8 356.4L996.9 276.1M793.1 358.2L1001.1 277.9M797.4 360L1005.4 279.7M801.6 361.8L1009.7 281.5M805.9 363.6L1014 283.4M810.2 365.4L1018.2 285.2M814.5 367.3L1022.5 287M818.7 369.1L1026.8 288.8M823 370.9L1031.1 290.6M827.3 372.7L1035.4 292.4M831.6 374.5L1039.6 294.3M835.9 376.4L1043.9 296.1M840.1 378.2L1048.2 297.9M844.4 380L1052.5 299.7M848.7 381.8L1056.8 301.5M853 383.6L1061 303.4M857.2 385.4L1065.3 305.2M861.5 387.3L1069.6 307M865.8 389.1L1073.9 308.8M870.1 390.9L1078.1 310.6M874.4 392.7L1082.4 312.4M667.8 304.2L881.2 394.9M672.1 302.5L885.6 393.2M676.5 300.8L889.9 391.5M680.8 299.1L894.2 389.9M685.1 297.5L898.6 388.2M689.5 295.8L902.9 386.5M693.8 294.1L907.3 384.8M698.2 292.5L911.6 383.2M702.5 290.8L915.9 381.5M706.8 289.1L920.3 379.8M711.2 287.4L924.6 378.1M715.5 285.8L928.9 376.5M719.8 284.1L933.3 374.8M724.2 282.4L937.6 373.1M728.5 280.7L942 371.4M732.9 279.1L946.3 369.8M737.2 277.4L950.6 368.1M741.5 275.7L955 366.4M745.9 274L959.3 364.8M750.2 272.4L963.7 363.1M754.6 270.7L968 361.4M758.9 269L972.3 359.7M763.2 267.3L976.7 358.1M767.6 265.7L981 356.4M771.9 264L985.3 354.7M776.2 262.3L989.7 353M780.6 260.6L994 351.4M784.9 259L998.4 349.7M789.3 257.3L1002.7 348M793.6 255.6L1007 346.3M797.9 254L1011.4 344.7M802.3 252.3L1015.7 343M806.6 250.6L1020.1 341.3M811 248.9L1024.4 339.6M815.3 247.3L1028.7 338M819.6 245.6L1033.1 336.3M824 243.9L1037.4 334.6M828.3 242.2L1041.7 332.9M832.6 240.6L1046.1 331.3M837 238.9L1050.4 329.6M841.3 237.2L1054.8 327.9M845.7 235.5L1059.1 326.2M850 233.9L1063.4 324.6M854.3 232.2L1067.8 322.9M858.7 230.5L1072.1 321.2M863 228.8L1076.5 319.6M867.4 227.2L1080.8 317.9M871.7 225.5L1085.1 316.2M675.4 314.2L883.5 233.9M684 317.8L892 237.5M692.5 321.4L900.6 241.2M701.1 325.1L909.2 244.8M709.7 328.7L917.7 248.4M718.2 332.4L926.3 252.1M726.8 336L934.8 255.7M735.3 339.6L943.4 259.4M743.9 343.3L951.9 263M752.4 346.9L960.5 266.6M761 350.5L969.1 270.3M769.5 354.2L977.6 273.9M778.1 357.8L986.2 277.5M786.7 361.4L994.7 281.2M795.2 365.1L1003.3 284.8M803.8 368.7L1011.8 288.4M812.3 372.4L1020.4 292.1M820.9 376L1028.9 295.7M829.4 379.6L1037.5 299.4M838 383.3L1046.1 303M846.6 386.9L1054.6 306.6M855.1 390.5L1063.2 310.3M863.7 394.2L1071.7 313.9M872.2 397.8L1080.3 317.5M670 309.3L883.4 400M678.6 306L892.1 396.7M687.3 302.6L900.7 393.4M696 299.3L909.4 390M704.7 295.9L918.1 386.7M713.3 292.6L926.8 383.3M722 289.2L935.5 380M730.7 285.9L944.1 376.6M739.4 282.6L952.8 373.3M748 279.2L961.5 369.9M756.7 275.9L970.2 366.6M765.4 272.5L978.8 363.2M774.1 269.2L987.5 359.9M782.8 265.8L996.2 356.5M791.4 262.5L1004.9 353.2M800.1 259.1L1013.5 349.8M808.8 255.8L1022.2 346.5M817.5 252.4L1030.9 343.1M826.1 249.1L1039.6 339.8M834.8 245.7L1048.3 336.4M843.5 242.4L1056.9 333.1M852.2 239L1065.6 329.7M860.8 235.7L1074.3 326.4M869.5 232.3L1083 323M667.8 304.9L667.8 310.9M875.8 224.6L875.8 230.6M672.1 306.7L672.1 312.7M880.1 226.5L880.1 232.5M676.3 308.6L676.3 314.6M884.4 228.3L884.4 234.3M680.6 310.4L680.6 316.4M888.7 230.1L888.7 236.1M684.9 312.2L684.9 318.2M892.9 231.9L892.9 237.9M689.2 314L689.2 320M897.2 233.7L897.2 239.7M693.4 315.8L693.4 321.8M901.5 235.6L901.5 241.6M697.7 317.6L697.7 323.6M905.8 237.4L905.8 243.4M702 319.5L702 325.5M910.1 239.2L910.1 245.2M706.3 321.3L706.3 327.3M914.3 241L914.3 247M710.6 323.1L710.6 329.1M918.6 242.8L918.6 248.8M714.8 324.9L714.8 330.9M922.9 244.6L922.9 250.6M719.1 326.7L719.1 332.7M927.2 246.5L927.2 252.5M723.4 328.6L723.4 334.6M931.4 248.3L931.4 254.3M727.7 330.4L727.7 336.4M935.7 250.1L935.7 256.1M731.9 332.2L731.9 338.2M940 251.9L940 257.9M736.2 334L736.2 340M944.3 253.7L944.3 259.7M740.5 335.8L740.5 341.8M948.6 255.6L948.6 261.6M744.8 337.6L744.8 343.6M952.8 257.4L952.8 263.4M749.1 339.5L749.1 345.5M957.1 259.2L957.1 265.2M753.3 341.3L753.3 347.3M961.4 261L961.4 267M757.6 343.1L757.6 349.1M965.7 262.8L965.7 268.8M761.9 344.9L761.9 350.9M969.9 264.6L969.9 270.6M766.2 346.7L766.2 352.7M974.2 266.5L974.2 272.5M770.4 348.6L770.4 354.6M978.5 268.3L978.5 274.3M774.7 350.4L774.7 356.4M982.8 270.1L982.8 276.1M779 352.2L779 358.2M987.1 271.9L987.1 277.9M783.3 354L783.3 360M991.3 273.7L991.3 279.7M787.6 355.8L787.6 361.8M995.6 275.6L995.6 281.6M791.8 357.6L791.8 363.6M999.9 277.4L999.9 283.4M796.1 359.5L796.1 365.5M1004.2 279.2L1004.2 285.2M800.4 361.3L800.4 367.3M1008.5 281L1008.5 287M804.7 363.1L804.7 369.1M1012.7 282.8L1012.7 288.8M808.9 364.9L808.9 370.9M1017 284.6L1017 290.6M813.2 366.7L813.2 372.7M1021.3 286.5L1021.3 292.5M817.5 368.6L817.5 374.6M1025.6 288.3L1025.6 294.3M821.8 370.4L821.8 376.4M1029.8 290.1L1029.8 296.1M826.1 372.2L826.1 378.2M1034.1 291.9L1034.1 297.9M830.3 374L830.3 380M1038.4 293.7L1038.4 299.7M834.6 375.8L834.6 381.8M1042.7 295.5L1042.7 301.5M838.9 377.6L838.9 383.6M1047 297.4L1047 303.4M843.2 379.5L843.2 385.5M1051.2 299.2L1051.2 305.2M847.4 381.3L847.4 387.3M1055.5 301L1055.5 307M851.7 383.1L851.7 389.1M1059.8 302.8L1059.8 308.8M856 384.9L856 390.9M1064.1 304.6L1064.1 310.6M860.3 386.7L860.3 392.7M1068.3 306.5L1068.3 312.5M864.6 388.6L864.6 394.6M1072.6 308.3L1072.6 314.3M868.8 390.4L868.8 396.4M1076.9 310.1L1076.9 316.1M873.1 392.2L873.1 398.2M1081.2 311.9L1081.2 317.9M877.4 394L877.4 400M1085.5 313.7L1085.5 319.7M667.8 304.2L667.8 310.2M881.2 394.9L881.2 400.9M672.1 302.5L672.1 308.5M885.6 393.2L885.6 399.2M676.5 300.8L676.5 306.8M889.9 391.5L889.9 397.5M680.8 299.1L680.8 305.1M894.2 389.9L894.2 395.9M685.1 297.5L685.1 303.5M898.6 388.2L898.6 394.2M689.5 295.8L689.5 301.8M902.9 386.5L902.9 392.5M693.8 294.1L693.8 300.1M907.3 384.8L907.3 390.8M698.2 292.5L698.2 298.5M911.6 383.2L911.6 389.2M702.5 290.8L702.5 296.8M915.9 381.5L915.9 387.5M706.8 289.1L706.8 295.1M920.3 379.8L920.3 385.8M711.2 287.4L711.2 293.4M924.6 378.1L924.6 384.1M715.5 285.8L715.5 291.8M928.9 376.5L928.9 382.5M719.8 284.1L719.8 290.1M933.3 374.8L933.3 380.8M724.2 282.4L724.2 288.4M937.6 373.1L937.6 379.1M728.5 280.7L728.5 286.7M942 371.4L942 377.4M732.9 279.1L732.9 285.1M946.3 369.8L946.3 375.8M737.2 277.4L737.2 283.4M950.6 368.1L950.6 374.1M741.5 275.7L741.5 281.7M955 366.4L955 372.4M745.9 274L745.9 280M959.3 364.8L959.3 370.8M750.2 272.4L750.2 278.4M963.7 363.1L963.7 369.1M754.6 270.7L754.6 276.7M968 361.4L968 367.4M758.9 269L758.9 275M972.3 359.7L972.3 365.7M763.2 267.3L763.2 273.3M976.7 358.1L976.7 364.1M767.6 265.7L767.6 271.7M981 356.4L981 362.4M771.9 264L771.9 270M985.3 354.7L985.3 360.7M776.2 262.3L776.2 268.3M989.7 353L989.7 359M780.6 260.6L780.6 266.6M994 351.4L994 357.4M784.9 259L784.9 265M998.4 349.7L998.4 355.7M789.3 257.3L789.3 263.3M1002.7 348L1002.7 354M793.6 255.6L793.6 261.6M1007 346.3L1007 352.3M797.9 254L797.9 260M1011.4 344.7L1011.4 350.7M802.3 252.3L802.3 258.3M1015.7 343L1015.7 349M806.6 250.6L806.6 256.6M1020.1 341.3L1020.1 347.3M811 248.9L811 254.9M1024.4 339.6L1024.4 345.6M815.3 247.3L815.3 253.3M1028.7 338L1028.7 344M819.6 245.6L819.6 251.6M1033.1 336.3L1033.1 342.3M824 243.9L824 249.9M1037.4 334.6L1037.4 340.6M828.3 242.2L828.3 248.2M1041.7 332.9L1041.7 338.9M832.6 240.6L832.6 246.6M1046.1 331.3L1046.1 337.3M837 238.9L837 244.9M1050.4 329.6L1050.4 335.6M841.3 237.2L841.3 243.2M1054.8 327.9L1054.8 333.9M845.7 235.5L845.7 241.5M1059.1 326.2L1059.1 332.2M850 233.9L850 239.9M1063.4 324.6L1063.4 330.6M854.3 232.2L854.3 238.2M1067.8 322.9L1067.8 328.9M858.7 230.5L858.7 236.5M1072.1 321.2L1072.1 327.2M863 228.8L863 234.8M1076.5 319.6L1076.5 325.6M867.4 227.2L867.4 233.2M1080.8 317.9L1080.8 323.9M871.7 225.5L871.7 231.5M1085.1 316.2L1085.1 322.2M665 327L880.3 418.5M880.3 418.5L891.5 414.2M891.5 414.2L676.2 322.7M676.2 322.7L665 327M665 304L880.3 395.5M880.3 395.5L891.5 391.2M891.5 391.2L676.2 299.7M676.2 299.7L665 304M665 327L665 304M880.3 418.5L880.3 395.5M891.5 414.2L891.5 391.2M676.2 322.7L676.2 299.7M666.4 325L881.7 416.5M666.4 324.1L881.7 415.6M666.4 305L881.7 396.5M666.4 304.1L881.7 395.6M669.2 323.9L884.5 415.4M669.2 323L884.5 414.5M669.2 303.9L884.5 395.4M669.2 303L884.5 394.5M672 322.8L887.3 414.3M672 321.9L887.3 413.4M672 302.8L887.3 394.3M672 301.9L887.3 393.4M674.8 321.7L890.1 413.2M674.8 320.8L890.1 412.3M674.8 301.7L890.1 393.2M674.8 300.8L890.1 392.3M666.4 318.3L881.7 409.8M666.4 317.4L881.7 408.9M674.8 315.1L890.1 406.5M674.8 314.2L890.1 405.6M666.4 311.6L881.7 403.1M666.4 310.7L881.7 402.2M674.8 308.4L890.1 399.9M674.8 307.5L890.1 399M667.5 325.4L675.9 322.2M675.9 322.2L675.9 302.2M675.9 302.2L667.5 305.4M667.5 305.4L667.5 325.4M671.7 323.8L671.7 303.8M670.1 326.5L678.5 323.3M678.5 323.3L678.5 303.3M678.5 303.3L670.1 306.5M670.1 306.5L670.1 326.5M672.2 327.4L680.6 324.2M680.6 324.2L680.6 304.2M680.6 304.2L672.2 307.4M672.2 307.4L672.2 327.4M674.8 328.5L683.2 325.3M683.2 325.3L683.2 305.3M683.2 305.3L674.8 308.5M674.8 308.5L674.8 328.5M679 326.9L679 306.9M677.1 329.5L685.5 326.3M685.5 326.3L685.5 306.3M685.5 306.3L677.1 309.5M677.1 309.5L677.1 329.5M678.8 330.2L687.2 327M687.2 327L687.2 307M687.2 307L678.8 310.2M678.8 310.2L678.8 330.2M681 331.2L689.4 327.9M689.4 327.9L689.4 307.9M689.4 307.9L681 311.2M681 311.2L681 331.2M685.2 329.6L685.2 309.6M684.3 332.5L692.6 329.3M692.6 329.3L692.6 309.3M692.6 309.3L684.3 312.5M684.3 312.5L684.3 332.5M685.9 333.3L694.3 330M694.3 330L694.3 310M694.3 310L685.9 313.3M685.9 313.3L685.9 333.3M688.2 334.2L696.6 331M696.6 331L696.6 311M696.6 311L688.2 314.2M688.2 314.2L688.2 334.2M692.4 332.6L692.4 312.6M691.3 335.6L699.7 332.3M699.7 332.3L699.7 312.3M699.7 312.3L691.3 315.6M691.3 315.6L691.3 335.6M693 336.3L701.4 333M701.4 333L701.4 313M701.4 313L693 316.3M693 316.3L693 336.3M695.8 337.4L704.1 334.2M704.1 334.2L704.1 314.2M704.1 314.2L695.8 317.4M695.8 317.4L695.8 337.4M699.9 335.8L699.9 315.8M697.7 338.2L706.1 335M706.1 335L706.1 315M706.1 315L697.7 318.2M697.7 318.2L697.7 338.2M700.1 339.3L708.5 336.1M708.5 336.1L708.5 316.1M708.5 316.1L700.1 319.3M700.1 319.3L700.1 339.3M701.9 340L710.3 336.8M710.3 336.8L710.3 316.8M710.3 316.8L701.9 320M701.9 320L701.9 340M706.1 338.4L706.1 318.4M704.7 341.2L713.1 338M713.1 338L713.1 318M713.1 318L704.7 321.2M704.7 321.2L704.7 341.2M707.3 342.3L715.7 339.1M715.7 339.1L715.7 319.1M715.7 319.1L707.3 322.3M707.3 322.3L707.3 342.3M709.2 343.2L717.6 339.9M717.6 339.9L717.6 319.9M717.6 319.9L709.2 323.2M709.2 323.2L709.2 343.2M713.4 341.5L713.4 321.5M711.7 344.2L720.1 341M720.1 341L720.1 321M720.1 321L711.7 324.2M711.7 324.2L711.7 344.2M714 345.2L722.4 341.9M722.4 341.9L722.4 321.9M722.4 321.9L714 325.2M714 325.2L714 345.2M715.6 345.9L724 342.6M724 342.6L724 322.6M724 322.6L715.6 325.9M715.6 325.9L715.6 345.9M719.8 344.2L719.8 324.2M718.7 347.2L727.1 343.9M727.1 343.9L727.1 323.9M727.1 323.9L718.7 327.2M718.7 327.2L718.7 347.2M720.8 348.1L729.2 344.8M729.2 344.8L729.2 324.8M729.2 324.8L720.8 328.1M720.8 328.1L720.8 348.1M722.8 348.9L731.2 345.7M731.2 345.7L731.2 325.7M731.2 325.7L722.8 328.9M722.8 328.9L722.8 348.9M727 347.3L727 327.3M724.8 349.8L733.2 346.5M733.2 346.5L733.2 326.5M733.2 326.5L724.8 329.8M724.8 329.8L724.8 349.8M728 351.1L736.4 347.9M736.4 347.9L736.4 327.9M736.4 327.9L728 331.1M728 331.1L728 351.1M729.8 351.9L738.2 348.7M738.2 348.7L738.2 328.7M738.2 328.7L729.8 331.9M729.8 331.9L729.8 351.9M734 350.3L734 330.3M732.4 353L740.8 349.8M740.8 349.8L740.8 329.8M740.8 329.8L732.4 333M732.4 333L732.4 353M734.9 354.1L743.3 350.8M743.3 350.8L743.3 330.8M743.3 330.8L734.9 334.1M734.9 334.1L734.9 354.1M737 355L745.4 351.7M745.4 351.7L745.4 331.7M745.4 331.7L737 335M737 335L737 355M741.2 353.4L741.2 333.4M739.5 356L747.9 352.8M747.9 352.8L747.9 332.8M747.9 332.8L739.5 336M739.5 336L739.5 356M741.3 356.8L749.7 353.5M749.7 353.5L749.7 333.5M749.7 333.5L741.3 336.8M741.3 336.8L741.3 356.8M744 357.9L752.4 354.7M752.4 354.7L752.4 334.7M752.4 334.7L744 337.9M744 337.9L744 357.9M748.2 356.3L748.2 336.3M745.9 358.8L754.3 355.5M754.3 355.5L754.3 335.5M754.3 335.5L745.9 338.8M745.9 338.8L745.9 358.8M748.8 360L757.2 356.7M757.2 356.7L757.2 336.7M757.2 336.7L748.8 340M748.8 340L748.8 360M751 360.9L759.4 357.7M759.4 357.7L759.4 337.7M759.4 337.7L751 340.9M751 340.9L751 360.9M755.2 359.3L755.2 339.3M752.4 361.5L760.8 358.3M760.8 358.3L760.8 338.3M760.8 338.3L752.4 341.5M752.4 341.5L752.4 361.5M754.8 362.5L763.2 359.3M763.2 359.3L763.2 339.3M763.2 339.3L754.8 342.5M754.8 342.5L754.8 362.5M757.2 363.5L765.6 360.3M765.6 360.3L765.6 340.3M765.6 340.3L757.2 343.5M757.2 343.5L757.2 363.5M761.4 361.9L761.4 341.9M760.3 364.9L768.7 361.6M768.7 361.6L768.7 341.6M768.7 341.6L760.3 344.9M760.3 344.9L760.3 364.9M762 365.6L770.4 362.4M770.4 362.4L770.4 342.4M770.4 342.4L762 345.6M762 345.6L762 365.6M764.5 366.7L772.9 363.4M772.9 363.4L772.9 343.4M772.9 343.4L764.5 346.7M764.5 346.7L764.5 366.7M768.7 365L768.7 345M766.5 367.5L774.9 364.2M774.9 364.2L774.9 344.2M774.9 344.2L766.5 347.5M766.5 347.5L766.5 367.5M769 368.6L777.4 365.3M777.4 365.3L777.4 345.3M777.4 345.3L769 348.6M769 348.6L769 368.6M771.2 369.5L779.6 366.2M779.6 366.2L779.6 346.2M779.6 346.2L771.2 349.5M771.2 349.5L771.2 369.5M775.4 367.9L775.4 347.9M773.4 370.4L781.8 367.2M781.8 367.2L781.8 347.2M781.8 347.2L773.4 350.4M773.4 350.4L773.4 370.4M776 371.5L784.4 368.3M784.4 368.3L784.4 348.3M784.4 348.3L776 351.5M776 351.5L776 371.5M778.3 372.5L786.7 369.3M786.7 369.3L786.7 349.3M786.7 349.3L778.3 352.5M778.3 352.5L778.3 372.5M782.5 370.9L782.5 350.9M780.9 373.6L789.3 370.4M789.3 370.4L789.3 350.4M789.3 350.4L780.9 353.6M780.9 353.6L780.9 373.6M783 374.5L791.4 371.3M791.4 371.3L791.4 351.3M791.4 351.3L783 354.5M783 354.5L783 374.5M785.6 375.6L794 372.4M794 372.4L794 352.4M794 352.4L785.6 355.6M785.6 355.6L785.6 375.6M789.8 374L789.8 354M787.8 376.5L796.2 373.3M796.2 373.3L796.2 353.3M796.2 353.3L787.8 356.5M787.8 356.5L787.8 376.5M790.2 377.6L798.6 374.3M798.6 374.3L798.6 354.3M798.6 354.3L790.2 357.6M790.2 357.6L790.2 377.6M792.2 378.4L800.6 375.2M800.6 375.2L800.6 355.2M800.6 355.2L792.2 358.4M792.2 358.4L792.2 378.4M796.4 376.8L796.4 356.8M793.9 379.2L802.3 375.9M802.3 375.9L802.3 355.9M802.3 355.9L793.9 359.2M793.9 359.2L793.9 379.2M797 380.5L805.4 377.2M805.4 377.2L805.4 357.2M805.4 357.2L797 360.5M797 360.5L797 380.5M799.4 381.5L807.8 378.2M807.8 378.2L807.8 358.2M807.8 358.2L799.4 361.5M799.4 361.5L799.4 381.5M803.6 379.9L803.6 359.9M801.6 382.4L810 379.2M810 379.2L810 359.2M810 359.2L801.6 362.4M801.6 362.4L801.6 382.4M803.6 383.3L812 380M812 380L812 360M812 360L803.6 363.3M803.6 363.3L803.6 383.3M806 384.3L814.4 381.1M814.4 381.1L814.4 361.1M814.4 361.1L806 364.3M806 364.3L806 384.3M810.2 382.7L810.2 362.7M807.8 385L816.2 381.8M816.2 381.8L816.2 361.8M816.2 361.8L807.8 365M807.8 365L807.8 385M810.7 386.3L819.1 383.1M819.1 383.1L819.1 363.1M819.1 363.1L810.7 366.3M810.7 366.3L810.7 386.3M812.8 387.2L821.2 383.9M821.2 383.9L821.2 363.9M821.2 363.9L812.8 367.2M812.8 367.2L812.8 387.2M817 385.5L817 365.5M814.7 388L823.1 384.8M823.1 384.8L823.1 364.8M823.1 364.8L814.7 368M814.7 368L814.7 388M816.8 388.9L825.2 385.6M825.2 385.6L825.2 365.6M825.2 365.6L816.8 368.9M816.8 368.9L816.8 388.9M820 390.2L828.4 387M828.4 387L828.4 367M828.4 367L820 370.2M820 370.2L820 390.2M824.2 388.6L824.2 368.6M822.4 391.3L830.8 388M830.8 388L830.8 368M830.8 368L822.4 371.3M822.4 371.3L822.4 391.3M823.7 391.8L832.1 388.6M832.1 388.6L832.1 368.6M832.1 368.6L823.7 371.8M823.7 371.8L823.7 391.8M826.8 393.1L835.2 389.9M835.2 389.9L835.2 369.9M835.2 369.9L826.8 373.1M826.8 373.1L826.8 393.1M831 391.5L831 371.5M828.7 393.9L837.1 390.7M837.1 390.7L837.1 370.7M837.1 370.7L828.7 373.9M828.7 373.9L828.7 393.9M830.7 394.8L839.1 391.5M839.1 391.5L839.1 371.5M839.1 371.5L830.7 374.8M830.7 374.8L830.7 394.8M833.2 395.8L841.5 392.6M841.5 392.6L841.5 372.6M841.5 372.6L833.2 375.8M833.2 375.8L833.2 395.8M837.4 394.2L837.4 374.2M836 397L844.4 393.8M844.4 393.8L844.4 373.8M844.4 373.8L836 377M836 377L836 397M838.4 398.1L846.8 394.8M846.8 394.8L846.8 374.8M846.8 374.8L838.4 378.1M838.4 378.1L838.4 398.1M839.8 398.6L848.2 395.4M848.2 395.4L848.2 375.4M848.2 375.4L839.8 378.6M839.8 378.6L839.8 398.6M844 397L844 377M842.7 399.9L851.1 396.7M851.1 396.7L851.1 376.7M851.1 376.7L842.7 379.9M842.7 379.9L842.7 399.9M844.4 400.6L852.8 397.4M852.8 397.4L852.8 377.4M852.8 377.4L844.4 380.6M844.4 380.6L844.4 400.6M847.4 401.9L855.8 398.7M855.8 398.7L855.8 378.7M855.8 378.7L847.4 381.9M847.4 381.9L847.4 401.9M851.6 400.3L851.6 380.3M849.3 402.7L857.7 399.4M857.7 399.4L857.7 379.4M857.7 379.4L849.3 382.7M849.3 382.7L849.3 402.7M852.2 403.9L860.6 400.7M860.6 400.7L860.6 380.7M860.6 380.7L852.2 383.9M852.2 383.9L852.2 403.9M854.6 404.9L863 401.7M863 401.7L863 381.7M863 381.7L854.6 384.9M854.6 384.9L854.6 404.9M858.8 403.3L858.8 383.3M856.4 405.7L864.8 402.5M864.8 402.5L864.8 382.5M864.8 382.5L856.4 385.7M856.4 385.7L856.4 405.7M859.2 406.9L867.6 403.7M867.6 403.7L867.6 383.7M867.6 383.7L859.2 386.9M859.2 386.9L859.2 406.9M860.8 407.6L869.2 404.3M869.2 404.3L869.2 384.3M869.2 384.3L860.8 387.6M860.8 387.6L860.8 407.6M865 405.9L865 385.9M862.8 408.4L871.2 405.2M871.2 405.2L871.2 385.2M871.2 385.2L862.8 388.4M862.8 388.4L862.8 408.4M865.7 409.7L874.1 406.4M874.1 406.4L874.1 386.4M874.1 386.4L865.7 389.7M865.7 389.7L865.7 409.7M867.4 410.4L875.8 407.1M875.8 407.1L875.8 387.1M875.8 387.1L867.4 390.4M867.4 390.4L867.4 410.4M871.6 408.7L871.6 388.7M869.8 411.4L878.2 408.2M878.2 408.2L878.2 388.2M878.2 388.2L869.8 391.4M869.8 391.4L869.8 411.4M872.4 412.5L880.8 409.3M880.8 409.3L880.8 389.3M880.8 389.3L872.4 392.5M872.4 392.5L872.4 412.5M874.9 413.6L883.3 410.3M883.3 410.3L883.3 390.3M883.3 390.3L874.9 393.6M874.9 393.6L874.9 413.6M879.1 412L879.1 392M876.7 414.3L885.1 411.1M885.1 411.1L885.1 391.1M885.1 391.1L876.7 394.3M876.7 394.3L876.7 414.3M878.9 415.3L887.3 412M887.3 412L887.3 392M887.3 392L878.9 395.3M878.9 395.3L878.9 415.3M863.7 250.3L1079 341.8M1079 341.8L1090.2 337.5M1090.2 337.5L874.9 246M874.9 246L863.7 250.3M863.7 227.3L1079 318.8M1079 318.8L1090.2 314.5M1090.2 314.5L874.9 223M874.9 223L863.7 227.3M863.7 250.3L863.7 227.3M1079 341.8L1079 318.8M1090.2 337.5L1090.2 314.5M874.9 246L874.9 223M865.1 248.3L1080.4 339.8M865.1 247.4L1080.4 338.9M865.1 228.3L1080.4 319.8M865.1 227.4L1080.4 318.9M867.9 247.2L1083.2 338.7M867.9 246.3L1083.2 337.8M867.9 227.2L1083.2 318.7M867.9 226.3L1083.2 317.8M870.7 246.1L1086 337.6M870.7 245.2L1086 336.7M870.7 226.1L1086 317.6M870.7 225.2L1086 316.7M873.5 245L1088.8 336.5M873.5 244.1L1088.8 335.6M873.5 225L1088.8 316.5M873.5 224.1L1088.8 315.6M865.1 241.6L1080.4 333.1M865.1 240.7L1080.4 332.2M873.5 238.4L1088.8 329.9M873.5 237.5L1088.8 329M865.1 234.9L1080.4 326.4M865.1 234L1080.4 325.5M873.5 231.7L1088.8 323.2M873.5 230.8L1088.8 322.3M866.9 249L875.3 245.8M875.3 245.8L875.3 225.8M875.3 225.8L866.9 229M866.9 229L866.9 249M871.1 247.4L871.1 227.4M868.6 249.8L877 246.5M877 246.5L877 226.5M877 226.5L868.6 229.8M868.6 229.8L868.6 249.8M871.6 251L880 247.8M880 247.8L880 227.8M880 227.8L871.6 231M871.6 231L871.6 251M873.8 252L882.2 248.7M882.2 248.7L882.2 228.7M882.2 228.7L873.8 232M873.8 232L873.8 252M878 250.4L878 230.4M875.6 252.7L884 249.5M884 249.5L884 229.5M884 229.5L875.6 232.7M875.6 232.7L875.6 252.7M878 253.7L886.4 250.5M886.4 250.5L886.4 230.5M886.4 230.5L878 233.7M878 233.7L878 253.7M880.3 254.7L888.7 251.5M888.7 251.5L888.7 231.5M888.7 231.5L880.3 234.7M880.3 234.7L880.3 254.7M884.5 253.1L884.5 233.1M882.8 255.8L891.2 252.5M891.2 252.5L891.2 232.5M891.2 232.5L882.8 235.8M882.8 235.8L882.8 255.8M885 256.7L893.4 253.5M893.4 253.5L893.4 233.5M893.4 233.5L885 236.7M885 236.7L885 256.7M887.3 257.7L895.7 254.5M895.7 254.5L895.7 234.5M895.7 234.5L887.3 237.7M887.3 237.7L887.3 257.7M891.5 256.1L891.5 236.1M889.6 258.7L898 255.5M898 255.5L898 235.5M898 235.5L889.6 238.7M889.6 238.7L889.6 258.7M892.3 259.8L900.7 256.6M900.7 256.6L900.7 236.6M900.7 236.6L892.3 239.8M892.3 239.8L892.3 259.8M894.1 260.6L902.5 257.4M902.5 257.4L902.5 237.4M902.5 237.4L894.1 240.6M894.1 240.6L894.1 260.6M898.3 259L898.3 239M896.3 261.5L904.7 258.3M904.7 258.3L904.7 238.3M904.7 238.3L896.3 241.5M896.3 241.5L896.3 261.5M899 262.7L907.3 259.4M907.3 259.4L907.3 239.4M907.3 239.4L899 242.7M899 242.7L899 262.7M900.7 263.4L909.1 260.2M909.1 260.2L909.1 240.2M909.1 240.2L900.7 243.4M900.7 243.4L900.7 263.4M904.9 261.8L904.9 241.8M903.1 264.4L911.5 261.2M911.5 261.2L911.5 241.2M911.5 241.2L903.1 244.4M903.1 244.4L903.1 264.4M906.1 265.7L914.5 262.5M914.5 262.5L914.5 242.5M914.5 242.5L906.1 245.7M906.1 245.7L906.1 265.7M907.9 266.5L916.3 263.2M916.3 263.2L916.3 243.2M916.3 243.2L907.9 246.5M907.9 246.5L907.9 266.5M912.1 264.9L912.1 244.9M910.3 267.5L918.7 264.2M918.7 264.2L918.7 244.2M918.7 244.2L910.3 247.5M910.3 247.5L910.3 267.5M912 268.2L920.4 264.9M920.4 264.9L920.4 244.9M920.4 244.9L912 248.2M912 248.2L912 268.2M914.7 269.4L923.1 266.1M923.1 266.1L923.1 246.1M923.1 246.1L914.7 249.4M914.7 249.4L914.7 269.4M918.9 267.7L918.9 247.7M917.2 270.4L925.6 267.2M925.6 267.2L925.6 247.2M925.6 247.2L917.2 250.4M917.2 250.4L917.2 270.4M918.9 271.1L927.3 267.9M927.3 267.9L927.3 247.9M927.3 247.9L918.9 251.1M918.9 251.1L918.9 271.1M921.8 272.4L930.2 269.1M930.2 269.1L930.2 249.1M930.2 249.1L921.8 252.4M921.8 252.4L921.8 272.4M926 270.8L926 250.8M924.2 273.4L932.6 270.1M932.6 270.1L932.6 250.1M932.6 250.1L924.2 253.4M924.2 253.4L924.2 273.4M925.8 274.1L934.2 270.8M934.2 270.8L934.2 250.8M934.2 250.8L925.8 254.1M925.8 254.1L925.8 274.1M928.7 275.3L937.1 272.1M937.1 272.1L937.1 252.1M937.1 252.1L928.7 255.3M928.7 255.3L928.7 275.3M932.9 273.7L932.9 253.7M930.9 276.2L939.3 273M939.3 273L939.3 253M939.3 253L930.9 256.2M930.9 256.2L930.9 276.2M933.4 277.3L941.8 274.1M941.8 274.1L941.8 254.1M941.8 254.1L933.4 257.3M933.4 257.3L933.4 277.3M935.3 278.1L943.7 274.9M943.7 274.9L943.7 254.9M943.7 254.9L935.3 258.1M935.3 258.1L935.3 278.1M939.5 276.5L939.5 256.5M938 279.3L946.4 276M946.4 276L946.4 256M946.4 256L938 259.3M938 259.3L938 279.3M940.4 280.3L948.8 277M948.8 277L948.8 257M948.8 257L940.4 260.3M940.4 260.3L940.4 280.3M941.9 280.9L950.3 277.7M950.3 277.7L950.3 257.7M950.3 257.7L941.9 260.9M941.9 260.9L941.9 280.9M946.1 279.3L946.1 259.3M944.2 281.9L952.6 278.7M952.6 278.7L952.6 258.7M952.6 258.7L944.2 261.9M944.2 261.9L944.2 281.9M947.2 283.2L955.6 279.9M955.6 279.9L955.6 259.9M955.6 259.9L947.2 263.2M947.2 263.2L947.2 283.2M949.8 284.3L958.2 281M958.2 281L958.2 261M958.2 261L949.8 264.3M949.8 264.3L949.8 284.3M954 282.7L954 262.7M951.3 284.9L959.7 281.7M959.7 281.7L959.7 261.7M959.7 261.7L951.3 264.9M951.3 264.9L951.3 284.9M953.9 286L962.3 282.8M962.3 282.8L962.3 262.8M962.3 262.8L953.9 266M953.9 266L953.9 286M956.3 287L964.7 283.8M964.7 283.8L964.7 263.8M964.7 263.8L956.3 267M956.3 267L956.3 287M960.5 285.4L960.5 265.4M958.3 287.9L966.7 284.6M966.7 284.6L966.7 264.6M966.7 264.6L958.3 267.9M958.3 267.9L958.3 287.9M960.7 288.9L969.1 285.6M969.1 285.6L969.1 265.6M969.1 265.6L960.7 268.9M960.7 268.9L960.7 288.9M962.9 289.8L971.3 286.6M971.3 286.6L971.3 266.6M971.3 266.6L962.9 269.8M962.9 269.8L962.9 289.8M967.1 288.2L967.1 268.2M965.3 290.8L973.7 287.6M973.7 287.6L973.7 267.6M973.7 267.6L965.3 270.8M965.3 270.8L965.3 290.8M967.8 291.9L976.2 288.7M976.2 288.7L976.2 268.7M976.2 268.7L967.8 271.9M967.8 271.9L967.8 291.9M969.8 292.8L978.2 289.5M978.2 289.5L978.2 269.5M978.2 269.5L969.8 272.8M969.8 272.8L969.8 292.8M974 291.1L974 271.1M972.2 293.8L980.6 290.5M980.6 290.5L980.6 270.5M980.6 270.5L972.2 273.8M972.2 273.8L972.2 293.8M974.9 294.9L983.3 291.7M983.3 291.7L983.3 271.7M983.3 271.7L974.9 274.9M974.9 274.9L974.9 294.9M976.4 295.6L984.8 292.3M984.8 292.3L984.8 272.3M984.8 272.3L976.4 275.6M976.4 275.6L976.4 295.6M980.6 293.9L980.6 273.9M979.3 296.8L987.7 293.6M987.7 293.6L987.7 273.6M987.7 273.6L979.3 276.8M979.3 276.8L979.3 296.8M981.8 297.9L990.2 294.6M990.2 294.6L990.2 274.6M990.2 274.6L981.8 277.9M981.8 277.9L981.8 297.9M983.6 298.6L992 295.4M992 295.4L992 275.4M992 275.4L983.6 278.6M983.6 278.6L983.6 298.6M987.8 297L987.8 277M985.8 299.6L994.2 296.3M994.2 296.3L994.2 276.3M994.2 276.3L985.8 279.6M985.8 279.6L985.8 299.6M988.7 300.8L997.1 297.6M997.1 297.6L997.1 277.6M997.1 277.6L988.7 280.8M988.7 280.8L988.7 300.8M990.4 301.5L998.8 298.3M998.8 298.3L998.8 278.3M998.8 278.3L990.4 281.5M990.4 281.5L990.4 301.5M994.6 299.9L994.6 279.9M992.7 302.5L1001.1 299.2M1001.1 299.2L1001.1 279.2M1001.1 279.2L992.7 282.5M992.7 282.5L992.7 302.5M995.2 303.6L1003.6 300.3M1003.6 300.3L1003.6 280.3M1003.6 280.3L995.2 283.6M995.2 283.6L995.2 303.6M997.8 304.7L1006.2 301.4M1006.2 301.4L1006.2 281.4M1006.2 281.4L997.8 284.7M997.8 284.7L997.8 304.7M1002 303.1L1002 283.1M999.5 305.4L1007.9 302.1M1007.9 302.1L1007.9 282.1M1007.9 282.1L999.5 285.4M999.5 285.4L999.5 305.4M1002 306.5L1010.4 303.2M1010.4 303.2L1010.4 283.2M1010.4 283.2L1002 286.5M1002 286.5L1002 306.5M1004.3 307.4L1012.7 304.2M1012.7 304.2L1012.7 284.2M1012.7 284.2L1004.3 287.4M1004.3 287.4L1004.3 307.4M1008.5 305.8L1008.5 285.8M1007.2 308.7L1015.6 305.4M1015.6 305.4L1015.6 285.4M1015.6 285.4L1007.2 288.7M1007.2 288.7L1007.2 308.7M1009 309.4L1017.4 306.2M1017.4 306.2L1017.4 286.2M1017.4 286.2L1009 289.4M1009 289.4L1009 309.4M1011.8 310.6L1020.2 307.4M1020.2 307.4L1020.2 287.4M1020.2 287.4L1011.8 290.6M1011.8 290.6L1011.8 310.6M1016 309L1016 289M1013.3 311.3L1021.7 308M1021.7 308L1021.7 288M1021.7 288L1013.3 291.3M1013.3 291.3L1013.3 311.3M1015.8 312.3L1024.2 309.1M1024.2 309.1L1024.2 289.1M1024.2 289.1L1015.8 292.3M1015.8 292.3L1015.8 312.3M1018.5 313.5L1026.9 310.2M1026.9 310.2L1026.9 290.2M1026.9 290.2L1018.5 293.5M1018.5 293.5L1018.5 313.5M1022.7 311.8L1022.7 291.8M1021 314.5L1029.4 311.3M1029.4 311.3L1029.4 291.3M1029.4 291.3L1021 294.5M1021 294.5L1021 314.5M1022.9 315.3L1031.3 312.1M1031.3 312.1L1031.3 292.1M1031.3 292.1L1022.9 295.3M1022.9 295.3L1022.9 315.3M1024.9 316.2L1033.3 312.9M1033.3 312.9L1033.3 292.9M1033.3 292.9L1024.9 296.2M1024.9 296.2L1024.9 316.2M1029.1 314.6L1029.1 294.6M1027.1 317.1L1035.5 313.9M1035.5 313.9L1035.5 293.9M1035.5 293.9L1027.1 297.1M1027.1 297.1L1027.1 317.1M1029.8 318.3L1038.2 315M1038.2 315L1038.2 295M1038.2 295L1029.8 298.3M1029.8 298.3L1029.8 318.3M1031.8 319.1L1040.2 315.9M1040.2 315.9L1040.2 295.9M1040.2 295.9L1031.8 299.1M1031.8 299.1L1031.8 319.1M1036 317.5L1036 297.5M1034.7 320.4L1043.1 317.1M1043.1 317.1L1043.1 297.1M1043.1 297.1L1034.7 300.4M1034.7 300.4L1034.7 320.4M1037.1 321.4L1045.5 318.1M1045.5 318.1L1045.5 298.1M1045.5 298.1L1037.1 301.4M1037.1 301.4L1037.1 321.4M1038.7 322L1047.1 318.8M1047.1 318.8L1047.1 298.8M1047.1 298.8L1038.7 302M1038.7 302L1038.7 322M1042.9 320.4L1042.9 300.4M1041.1 323.1L1049.5 319.8M1049.5 319.8L1049.5 299.8M1049.5 299.8L1041.1 303.1M1041.1 303.1L1041.1 323.1M1043.9 324.3L1052.3 321M1052.3 321L1052.3 301M1052.3 301L1043.9 304.3M1043.9 304.3L1043.9 324.3M1046.1 325.2L1054.5 321.9M1054.5 321.9L1054.5 301.9M1054.5 301.9L1046.1 305.2M1046.1 305.2L1046.1 325.2M1050.3 323.6L1050.3 303.6M1048.5 326.2L1056.9 323M1056.9 323L1056.9 303M1056.9 303L1048.5 306.2M1048.5 306.2L1048.5 326.2M1050.3 327L1058.7 323.8M1058.7 323.8L1058.7 303.8M1058.7 303.8L1050.3 307M1050.3 307L1050.3 327M1052.4 327.9L1060.8 324.6M1060.8 324.6L1060.8 304.6M1060.8 304.6L1052.4 307.9M1052.4 307.9L1052.4 327.9M1056.6 326.3L1056.6 306.3M1054.9 328.9L1063.3 325.7M1063.3 325.7L1063.3 305.7M1063.3 305.7L1054.9 308.9M1054.9 308.9L1054.9 328.9M1057.7 330.1L1066.1 326.9M1066.1 326.9L1066.1 306.9M1066.1 306.9L1057.7 310.1M1057.7 310.1L1057.7 330.1M1059.5 330.9L1067.9 327.6M1067.9 327.6L1067.9 307.6M1067.9 307.6L1059.5 310.9M1059.5 310.9L1059.5 330.9M1063.7 329.2L1063.7 309.2M1061.8 331.9L1070.2 328.6M1070.2 328.6L1070.2 308.6M1070.2 308.6L1061.8 311.9M1061.8 311.9L1061.8 331.9M1064.2 332.9L1072.6 329.7M1072.6 329.7L1072.6 309.7M1072.6 309.7L1064.2 312.9M1064.2 312.9L1064.2 332.9M1066.5 333.9L1074.9 330.6M1074.9 330.6L1074.9 310.6M1074.9 310.6L1066.5 313.9M1066.5 313.9L1066.5 333.9M1070.7 332.3L1070.7 312.3M1068.8 334.8L1077.2 331.6M1077.2 331.6L1077.2 311.6M1077.2 311.6L1068.8 314.8M1068.8 314.8L1068.8 334.8M1071.7 336.1L1080.1 332.8M1080.1 332.8L1080.1 312.8M1080.1 312.8L1071.7 316.1M1071.7 316.1L1071.7 336.1M1073.1 336.7L1081.5 333.4M1081.5 333.4L1081.5 313.4M1081.5 313.4L1073.1 316.7M1073.1 316.7L1073.1 336.7M1077.3 335.1L1077.3 315.1M1075.3 337.6L1083.7 334.3M1083.7 334.3L1083.7 314.3M1083.7 314.3L1075.3 317.6M1075.3 317.6L1075.3 337.6M1078.6 339L1087 335.8M1087 335.8L1087 315.8M1087 315.8L1078.6 319M1078.6 319L1078.6 339M665 411L677.9 416.5M677.9 416.5L689.1 412.2M689.1 412.2L676.2 406.7M676.2 406.7L665 411M665 303L677.9 308.5M677.9 308.5L689.1 304.2M689.1 304.2L676.2 298.7M676.2 298.7L665 303M665 411L665 303M677.9 416.5L677.9 308.5M689.1 412.2L689.1 304.2M676.2 406.7L676.2 298.7M666.5 410L666.5 303M676.2 406.3L676.2 299.3M672.2 412.4L672.2 305.4M681.9 408.7L681.9 301.7M671.3 408.2L671.3 301.2M682.7 413L682.7 306M677.9 414.9L677.9 307.9M687.6 411.1L687.6 304.1M666.5 408.7L677.9 413.6M677.9 413.6L687.6 409.8M687.6 409.8L676.2 405M676.2 405L666.5 408.7M672.2 411.1L681.9 407.4M671.3 406.8L682.7 411.7M666.5 407.5L677.9 412.4M677.9 412.4L687.6 408.6M687.6 408.6L676.2 403.8M676.2 403.8L666.5 407.5M672.2 409.9L682.7 410.5M682.7 410.5L681.9 406.2M681.9 406.2L671.3 405.6M671.3 405.6L672.2 409.9M666.5 405.3L677.9 410.2M677.9 410.2L687.6 406.4M687.6 406.4L676.2 401.6M676.2 401.6L666.5 405.3M666.5 402.5L677.9 407.3M677.9 407.3L687.6 403.6M687.6 403.6L676.2 398.7M676.2 398.7L666.5 402.5M666.5 398.8L677.9 403.6M677.9 403.6L687.6 399.9M687.6 399.9L676.2 395M676.2 395L666.5 398.8M672.2 401.2L681.9 397.4M671.3 396.9L682.7 401.7M666.5 395.5L677.9 400.3M677.9 400.3L687.6 396.6M687.6 396.6L676.2 391.7M676.2 391.7L666.5 395.5M666.5 392.7L677.9 397.6M677.9 397.6L687.6 393.9M687.6 393.9L676.2 389M676.2 389L666.5 392.7M666.5 389L677.9 393.9M677.9 393.9L687.6 390.1M687.6 390.1L676.2 385.3M676.2 385.3L666.5 389M672.2 391.5L681.9 387.7M671.3 387.2L682.7 392M666.5 385.7L677.9 390.5M677.9 390.5L687.6 386.8M687.6 386.8L676.2 381.9M676.2 381.9L666.5 385.7M666.5 382.5L677.9 387.3M677.9 387.3L687.6 383.6M687.6 383.6L676.2 378.8M676.2 378.8L666.5 382.5M666.5 381.3L677.9 386.1M677.9 386.1L687.6 382.4M687.6 382.4L676.2 377.6M676.2 377.6L666.5 381.3M672.2 383.7L682.7 384.3M682.7 384.3L681.9 380M681.9 380L671.3 379.4M671.3 379.4L672.2 383.7M666.5 379.3L677.9 384.2M677.9 384.2L687.6 380.4M687.6 380.4L676.2 375.6M676.2 375.6L666.5 379.3M672.2 381.7L681.9 378M671.3 377.4L682.7 382.3M666.5 376.2L677.9 381M677.9 381L687.6 377.3M687.6 377.3L676.2 372.4M676.2 372.4L666.5 376.2M666.5 372.9L677.9 377.7M677.9 377.7L687.6 374M687.6 374L676.2 369.1M676.2 369.1L666.5 372.9M666.5 369.6L677.9 374.5M677.9 374.5L687.6 370.7M687.6 370.7L676.2 365.9M676.2 365.9L666.5 369.6M672.2 372.1L681.9 368.3M671.3 367.8L682.7 372.6M666.5 366.5L677.9 371.3M677.9 371.3L687.6 367.6M687.6 367.6L676.2 362.7M676.2 362.7L666.5 366.5M666.5 362.8L677.9 367.6M677.9 367.6L687.6 363.9M687.6 363.9L676.2 359M676.2 359L666.5 362.8M666.5 359.7L677.9 364.5M677.9 364.5L687.6 360.8M687.6 360.8L676.2 356M676.2 356L666.5 359.7M672.2 362.1L681.9 358.4M671.3 357.8L682.7 362.7M666.5 356L677.9 360.8M677.9 360.8L687.6 357.1M687.6 357.1L676.2 352.2M676.2 352.2L666.5 356M666.5 354.8L677.9 359.6M677.9 359.6L687.6 355.9M687.6 355.9L676.2 351M676.2 351L666.5 354.8M672.2 357.2L682.7 357.8M682.7 357.8L681.9 353.5M681.9 353.5L671.3 352.9M671.3 352.9L672.2 357.2M666.5 353.3L677.9 358.1M677.9 358.1L687.6 354.4M687.6 354.4L676.2 349.5M676.2 349.5L666.5 353.3M666.5 349.3L677.9 354.2M677.9 354.2L687.6 350.4M687.6 350.4L676.2 345.6M676.2 345.6L666.5 349.3M672.2 351.7L681.9 348M671.3 347.4L682.7 352.3M666.5 346.2L677.9 351M677.9 351L687.6 347.3M687.6 347.3L676.2 342.4M676.2 342.4L666.5 346.2M666.5 342.7L677.9 347.5M677.9 347.5L687.6 343.8M687.6 343.8L676.2 338.9M676.2 338.9L666.5 342.7M666.5 339.4L677.9 344.3M677.9 344.3L687.6 340.5M687.6 340.5L676.2 335.7M676.2 335.7L666.5 339.4M672.2 341.8L681.9 338.1M671.3 337.5L682.7 342.4M666.5 336.1L677.9 341M677.9 341L687.6 337.2M687.6 337.2L676.2 332.4M676.2 332.4L666.5 336.1M666.5 333.1L677.9 337.9M677.9 337.9L687.6 334.2M687.6 334.2L676.2 329.3M676.2 329.3L666.5 333.1M666.5 330.2L677.9 335.1M677.9 335.1L687.6 331.3M687.6 331.3L676.2 326.5M676.2 326.5L666.5 330.2M672.2 332.6L681.9 328.9M671.3 328.3L682.7 333.2M666.5 329L677.9 333.9M677.9 333.9L687.6 330.1M687.6 330.1L676.2 325.3M676.2 325.3L666.5 329M672.2 331.4L682.7 332M682.7 332L681.9 327.7M681.9 327.7L671.3 327.1M671.3 327.1L672.2 331.4M666.5 326.3L677.9 331.2M677.9 331.2L687.6 327.4M687.6 327.4L676.2 322.6M676.2 322.6L666.5 326.3M666.5 323.5L677.9 328.3M677.9 328.3L687.6 324.6M687.6 324.6L676.2 319.7M676.2 319.7L666.5 323.5M666.5 320.1L677.9 324.9M677.9 324.9L687.6 321.2M687.6 321.2L676.2 316.3M676.2 316.3L666.5 320.1M672.2 322.5L681.9 318.8M671.3 318.2L682.7 323.1M666.5 316.5L677.9 321.3M677.9 321.3L687.6 317.6M687.6 317.6L676.2 312.8M676.2 312.8L666.5 316.5M666.5 313.3L677.9 318.2M677.9 318.2L687.6 314.4M687.6 314.4L676.2 309.6M676.2 309.6L666.5 313.3M666.5 310.1L677.9 314.9M677.9 314.9L687.6 311.2M687.6 311.2L676.2 306.3M676.2 306.3L666.5 310.1M672.2 312.5L681.9 308.8M671.3 308.2L682.7 313.1M666.5 306.4L677.9 311.2M677.9 311.2L687.6 307.5M687.6 307.5L676.2 302.6M676.2 302.6L666.5 306.4M863.7 334.3L876.6 339.8M876.6 339.8L887.8 335.5M887.8 335.5L874.9 330M874.9 330L863.7 334.3M863.7 226.3L876.6 231.8M876.6 231.8L887.8 227.5M887.8 227.5L874.9 222M874.9 222L863.7 226.3M863.7 334.3L863.7 226.3M876.6 339.8L876.6 231.8M887.8 335.5L887.8 227.5M874.9 330L874.9 222M865.2 333.3L865.2 226.3M874.9 329.6L874.9 222.6M870.9 335.8L870.9 228.8M880.6 332L880.6 225M870.1 331.5L870.1 224.5M881.5 336.3L881.5 229.3M876.6 338.2L876.6 231.2M886.3 334.4L886.3 227.4M865.2 332.3L876.6 337.1M876.6 337.1L886.3 333.4M886.3 333.4L874.9 328.5M874.9 328.5L865.2 332.3M870.9 334.7L880.6 330.9M870.1 330.4L881.5 335.2M865.2 331.1L876.6 335.9M876.6 335.9L886.3 332.2M886.3 332.2L874.9 327.3M874.9 327.3L865.2 331.1M870.9 333.5L881.5 334M881.5 334L880.6 329.7M880.6 329.7L870.1 329.2M870.1 329.2L870.9 333.5M865.2 329.2L876.6 334M876.6 334L886.3 330.3M886.3 330.3L874.9 325.4M874.9 325.4L865.2 329.2M865.2 325.9L876.6 330.8M876.6 330.8L886.3 327M886.3 327L874.9 322.2M874.9 322.2L865.2 325.9M865.2 322.2L876.6 327M876.6 327L886.3 323.3M886.3 323.3L874.9 318.4M874.9 318.4L865.2 322.2M870.9 324.6L880.6 320.8M870.1 320.3L881.5 325.1M865.2 319.2L876.6 324M876.6 324L886.3 320.3M886.3 320.3L874.9 315.4M874.9 315.4L865.2 319.2M865.2 315.6L876.6 320.5M876.6 320.5L886.3 316.7M886.3 316.7L874.9 311.9M874.9 311.9L865.2 315.6M865.2 312.7L876.6 317.5M876.6 317.5L886.3 313.8M886.3 313.8L874.9 308.9M874.9 308.9L865.2 312.7M870.9 315.1L880.6 311.3M870.1 310.8L881.5 315.6M865.2 309.5L876.6 314.3M876.6 314.3L886.3 310.6M886.3 310.6L874.9 305.7M874.9 305.7L865.2 309.5M865.2 305.9L876.6 310.8M876.6 310.8L886.3 307M886.3 307L874.9 302.2M874.9 302.2L865.2 305.9M865.2 304.7L876.6 309.6M876.6 309.6L886.3 305.8M886.3 305.8L874.9 301M874.9 301L865.2 304.7M870.9 307.1L881.5 307.7M881.5 307.7L880.6 303.4M880.6 303.4L870.1 302.8M870.1 302.8L870.9 307.1M865.2 302.4L876.6 307.2M876.6 307.2L886.3 303.5M886.3 303.5L874.9 298.6M874.9 298.6L865.2 302.4M870.9 304.8L880.6 301.1M870.1 300.5L881.5 305.4M865.2 299.6L876.6 304.5M876.6 304.5L886.3 300.7M886.3 300.7L874.9 295.9M874.9 295.9L865.2 299.6M865.2 295.8L876.6 300.7M876.6 300.7L886.3 296.9M886.3 296.9L874.9 292.1M874.9 292.1L865.2 295.8M865.2 292.4L876.6 297.3M876.6 297.3L886.3 293.5M886.3 293.5L874.9 288.7M874.9 288.7L865.2 292.4M870.9 294.8L880.6 291.1M870.1 290.5L881.5 295.4M865.2 289.2L876.6 294M876.6 294L886.3 290.3M886.3 290.3L874.9 285.5M874.9 285.5L865.2 289.2M865.2 285.9L876.6 290.7M876.6 290.7L886.3 287M886.3 287L874.9 282.1M874.9 282.1L865.2 285.9M865.2 283.2L876.6 288.1M876.6 288.1L886.3 284.3M886.3 284.3L874.9 279.5M874.9 279.5L865.2 283.2M870.9 285.7L880.6 281.9M870.1 281.4L881.5 286.2M865.2 279.4L876.6 284.3M876.6 284.3L886.3 280.5M886.3 280.5L874.9 275.7M874.9 275.7L865.2 279.4M865.2 278.2L876.6 283.1M876.6 283.1L886.3 279.3M886.3 279.3L874.9 274.5M874.9 274.5L865.2 278.2M870.9 280.7L881.5 281.2M881.5 281.2L880.6 276.9M880.6 276.9L870.1 276.4M870.1 276.4L870.9 280.7M865.2 276L876.6 280.8M876.6 280.8L886.3 277.1M886.3 277.1L874.9 272.2M874.9 272.2L865.2 276M865.2 273.3L876.6 278.2M876.6 278.2L886.3 274.4M886.3 274.4L874.9 269.6M874.9 269.6L865.2 273.3M870.9 275.7L880.6 272M870.1 271.4L881.5 276.3M865.2 269.8L876.6 274.7M876.6 274.7L886.3 270.9M886.3 270.9L874.9 266.1M874.9 266.1L865.2 269.8M865.2 266.5L876.6 271.4M876.6 271.4L886.3 267.6M886.3 267.6L874.9 262.8M874.9 262.8L865.2 266.5M865.2 263L876.6 267.9M876.6 267.9L886.3 264.1M886.3 264.1L874.9 259.3M874.9 259.3L865.2 263M870.9 265.4L880.6 261.7M870.1 261.2L881.5 266M865.2 259.8L876.6 264.7M876.6 264.7L886.3 260.9M886.3 260.9L874.9 256.1M874.9 256.1L865.2 259.8M865.2 256.5L876.6 261.3M876.6 261.3L886.3 257.6M886.3 257.6L874.9 252.7M874.9 252.7L865.2 256.5M865.2 252.9L876.6 257.8M876.6 257.8L886.3 254M886.3 254L874.9 249.2M874.9 249.2L865.2 252.9M870.9 255.3L880.6 251.6M870.1 251.1L881.5 255.9M865.2 251.7L876.6 256.6M876.6 256.6L886.3 252.8M886.3 252.8L874.9 248M874.9 248L865.2 251.7M870.9 254.1L881.5 254.7M881.5 254.7L880.6 250.4M880.6 250.4L870.1 249.9M870.1 249.9L870.9 254.1M865.2 250.2L876.6 255.1M876.6 255.1L886.3 251.3M886.3 251.3L874.9 246.5M874.9 246.5L865.2 250.2M865.2 246.9L876.6 251.7M876.6 251.7L886.3 248M886.3 248L874.9 243.2M874.9 243.2L865.2 246.9M865.2 243.5L876.6 248.4M876.6 248.4L886.3 244.6M886.3 244.6L874.9 239.8M874.9 239.8L865.2 243.5M870.9 246L880.6 242.2M870.1 241.7L881.5 246.5M865.2 240.2L876.6 245.1M876.6 245.1L886.3 241.3M886.3 241.3L874.9 236.5M874.9 236.5L865.2 240.2M865.2 237L876.6 241.8M876.6 241.8L886.3 238.1M886.3 238.1L874.9 233.2M874.9 233.2L865.2 237M865.2 233L876.6 237.8M876.6 237.8L886.3 234.1M886.3 234.1L874.9 229.2M874.9 229.2L865.2 233M870.9 235.4L880.6 231.6M870.1 231.1L881.5 235.9M865.2 229.8L876.6 234.6M876.6 234.6L886.3 230.9M886.3 230.9L874.9 226M874.9 226L865.2 229.8M767.1 454.4L780 459.9M780 459.9L791.2 455.6M791.2 455.6L778.3 450.1M778.3 450.1L767.1 454.4M767.1 346.4L780 351.9M780 351.9L791.2 347.6M791.2 347.6L778.3 342.1M778.3 342.1L767.1 346.4M767.1 454.4L767.1 346.4M780 459.9L780 351.9M791.2 455.6L791.2 347.6M778.3 450.1L778.3 342.1M768.6 453.4L768.6 346.4M778.3 449.7L778.3 342.7M774.3 455.9L774.3 348.9M784 452.1L784 345.1M773.5 451.6L773.5 344.6M784.9 456.4L784.9 349.4M780 458.3L780 351.3M789.7 454.5L789.7 347.5M768.6 452.8L780 457.6M780 457.6L789.7 453.9M789.7 453.9L778.3 449M778.3 449L768.6 452.8M774.3 455.2L784 451.4M773.5 450.9L784.9 455.7M768.6 451.6L780 456.4M780 456.4L789.7 452.7M789.7 452.7L778.3 447.8M778.3 447.8L768.6 451.6M774.3 454L784.9 454.5M784.9 454.5L784 450.2M784 450.2L773.5 449.7M773.5 449.7L774.3 454M768.6 449.1L780 454M780 454L789.7 450.2M789.7 450.2L778.3 445.4M778.3 445.4L768.6 449.1M768.6 446L780 450.8M780 450.8L789.7 447.1M789.7 447.1L778.3 442.2M778.3 442.2L768.6 446M768.6 442.7L780 447.5M780 447.5L789.7 443.8M789.7 443.8L778.3 438.9M778.3 438.9L768.6 442.7M774.3 445.1L784 441.4M773.5 440.8L784.9 445.7M768.6 439.3L780 444.2M780 444.2L789.7 440.4M789.7 440.4L778.3 435.6M778.3 435.6L768.6 439.3M768.6 435.8L780 440.7M780 440.7L789.7 436.9M789.7 436.9L778.3 432.1M778.3 432.1L768.6 435.8M768.6 432.6L780 437.4M780 437.4L789.7 433.7M789.7 433.7L778.3 428.8M778.3 428.8L768.6 432.6M774.3 435L784 431.2M773.5 430.7L784.9 435.5M768.6 429.4L780 434.3M780 434.3L789.7 430.5M789.7 430.5L778.3 425.7M778.3 425.7L768.6 429.4M768.6 426.3L780 431.1M780 431.1L789.7 427.4M789.7 427.4L778.3 422.5M778.3 422.5L768.6 426.3M768.6 425.1L780 429.9M780 429.9L789.7 426.2M789.7 426.2L778.3 421.3M778.3 421.3L768.6 425.1M774.3 427.5L784.9 428M784.9 428L784 423.8M784 423.8L773.5 423.2M773.5 423.2L774.3 427.5M768.6 422.9L780 427.7M780 427.7L789.7 424M789.7 424L778.3 419.1M778.3 419.1L768.6 422.9M774.3 425.3L784 421.5M773.5 421L784.9 425.8M768.6 419.7L780 424.6M780 424.6L789.7 420.8M789.7 420.8L778.3 416M778.3 416L768.6 419.7M768.6 416.1L780 420.9M780 420.9L789.7 417.2M789.7 417.2L778.3 412.3M778.3 412.3L768.6 416.1M768.6 412.7L780 417.5M780 417.5L789.7 413.8M789.7 413.8L778.3 408.9M778.3 408.9L768.6 412.7M774.3 415.1L784 411.3M773.5 410.8L784.9 415.6M768.6 409.6L780 414.5M780 414.5L789.7 410.7M789.7 410.7L778.3 405.9M778.3 405.9L768.6 409.6M768.6 406.6L780 411.4M780 411.4L789.7 407.7M789.7 407.7L778.3 402.8M778.3 402.8L768.6 406.6M768.6 403.2L780 408M780 408L789.7 404.3M789.7 404.3L778.3 399.4M778.3 399.4L768.6 403.2M774.3 405.6L784 401.9M773.5 401.3L784.9 406.2M768.6 399.7L780 404.6M780 404.6L789.7 400.8M789.7 400.8L778.3 396M778.3 396L768.6 399.7M768.6 398.5L780 403.4M780 403.4L789.7 399.6M789.7 399.6L778.3 394.8M778.3 394.8L768.6 398.5M774.3 401L784.9 401.5M784.9 401.5L784 397.2M784 397.2L773.5 396.7M773.5 396.7L774.3 401M768.6 396.2L780 401.1M780 401.1L789.7 397.3M789.7 397.3L778.3 392.5M778.3 392.5L768.6 396.2M768.6 392.8L780 397.6M780 397.6L789.7 393.9M789.7 393.9L778.3 389.1M778.3 389.1L768.6 392.8M774.3 395.2L784 391.5M773.5 390.9L784.9 395.8M768.6 389.8L780 394.7M780 394.7L789.7 390.9M789.7 390.9L778.3 386.1M778.3 386.1L768.6 389.8M768.6 386.2L780 391M780 391L789.7 387.3M789.7 387.3L778.3 382.4M778.3 382.4L768.6 386.2M768.6 383L780 387.9M780 387.9L789.7 384.1M789.7 384.1L778.3 379.3M778.3 379.3L768.6 383M774.3 385.5L784 381.7M773.5 381.2L784.9 386M768.6 379.9L780 384.7M780 384.7L789.7 381M789.7 381L778.3 376.1M778.3 376.1L768.6 379.9M768.6 376.6L780 381.5M780 381.5L789.7 377.7M789.7 377.7L778.3 372.9M778.3 372.9L768.6 376.6M768.6 373.2L780 378.1M780 378.1L789.7 374.3M789.7 374.3L778.3 369.5M778.3 369.5L768.6 373.2M774.3 375.7L784 371.9M773.5 371.4L784.9 376.2M768.6 372L780 376.9M780 376.9L789.7 373.1M789.7 373.1L778.3 368.3M778.3 368.3L768.6 372M774.3 374.5L784.9 375M784.9 375L784 370.7M784 370.7L773.5 370.2M773.5 370.2L774.3 374.5M768.6 369.8L780 374.6M780 374.6L789.7 370.9M789.7 370.9L778.3 366M778.3 366L768.6 369.8M768.6 366.7L780 371.5M780 371.5L789.7 367.8M789.7 367.8L778.3 362.9M778.3 362.9L768.6 366.7M768.6 363.2L780 368M780 368L789.7 364.3M789.7 364.3L778.3 359.4M778.3 359.4L768.6 363.2M774.3 365.6L784 361.9M773.5 361.3L784.9 366.1M768.6 360.1L780 364.9M780 364.9L789.7 361.2M789.7 361.2L778.3 356.3M778.3 356.3L768.6 360.1M768.6 356.9L780 361.8M780 361.8L789.7 358M789.7 358L778.3 353.2M778.3 353.2L768.6 356.9M768.6 353.4L780 358.2M780 358.2L789.7 354.5M789.7 354.5L778.3 349.7M778.3 349.7L768.6 353.4M774.3 355.8L784 352.1M773.5 351.5L784.9 356.4M768.6 350L780 354.8M780 354.8L789.7 351.1M789.7 351.1L778.3 346.2M778.3 346.2L768.6 350M965.8 377.7L978.7 383.2M978.7 383.2L989.9 378.9M989.9 378.9L977 373.4M977 373.4L965.8 377.7M965.8 269.7L978.7 275.2M978.7 275.2L989.9 270.9M989.9 270.9L977 265.4M977 265.4L965.8 269.7M965.8 377.7L965.8 269.7M978.7 383.2L978.7 275.2M989.9 378.9L989.9 270.9M977 373.4L977 265.4M967.3 376.7L967.3 251.7M977 373L977 248M973 379.2L973 254.2M982.7 375.4L982.7 250.4M972.2 374.9L972.2 249.9M983.6 379.7L983.6 254.7M978.7 381.6L978.7 256.6M988.4 377.9L988.4 252.9M967.3 376.1L978.7 380.9M978.7 380.9L988.4 377.2M988.4 377.2L977 372.3M977 372.3L967.3 376.1M973 378.5L982.7 374.8M972.2 374.2L983.6 379.1M967.3 374.9L978.7 379.7M978.7 379.7L988.4 376M988.4 376L977 371.1M977 371.1L967.3 374.9M973 377.3L983.6 377.9M983.6 377.9L982.7 373.6M982.7 373.6L972.2 373M972.2 373L973 377.3M967.3 372.5L978.7 377.4M978.7 377.4L988.4 373.6M988.4 373.6L977 368.8M977 368.8L967.3 372.5M967.3 369.2L978.7 374.1M978.7 374.1L988.4 370.3M988.4 370.3L977 365.5M977 365.5L967.3 369.2M967.3 365.5L978.7 370.4M978.7 370.4L988.4 366.6M988.4 366.6L977 361.8M977 361.8L967.3 365.5M973 368L982.7 364.2M972.2 363.7L983.6 368.5M967.3 362.2L978.7 367M978.7 367L988.4 363.3M988.4 363.3L977 358.5M977 358.5L967.3 362.2M967.3 359.3L978.7 364.2M978.7 364.2L988.4 360.5M988.4 360.5L977 355.6M977 355.6L967.3 359.3M967.3 355.6L978.7 360.5M978.7 360.5L988.4 356.7M988.4 356.7L977 351.9M977 351.9L967.3 355.6M973 358.1L982.7 354.3M972.2 353.8L983.6 358.6M967.3 352.4L978.7 357.3M978.7 357.3L988.4 353.5M988.4 353.5L977 348.7M977 348.7L967.3 352.4M967.3 349.5L978.7 354.4M978.7 354.4L988.4 350.6M988.4 350.6L977 345.8M977 345.8L967.3 349.5M967.3 348.3L978.7 353.2M978.7 353.2L988.4 349.4M988.4 349.4L977 344.6M977 344.6L967.3 348.3M973 350.8L983.6 351.3M983.6 351.3L982.7 347M982.7 347L972.2 346.5M972.2 346.5L973 350.8M967.3 346.1L978.7 350.9M978.7 350.9L988.4 347.2M988.4 347.2L977 342.3M977 342.3L967.3 346.1M973 348.5L982.7 344.8M972.2 344.2L983.6 349.1M967.3 343L978.7 347.9M978.7 347.9L988.4 344.2M988.4 344.2L977 339.3M977 339.3L967.3 343M967.3 339.2L978.7 344M978.7 344L988.4 340.3M988.4 340.3L977 335.5M977 335.5L967.3 339.2M967.3 336L978.7 340.9M978.7 340.9L988.4 337.1M988.4 337.1L977 332.3M977 332.3L967.3 336M973 338.4L982.7 334.7M972.2 334.1L983.6 339M967.3 332.5L978.7 337.4M978.7 337.4L988.4 333.6M988.4 333.6L977 328.8M977 328.8L967.3 332.5M967.3 329.3L978.7 334.2M978.7 334.2L988.4 330.4M988.4 330.4L977 325.6M977 325.6L967.3 329.3M967.3 326.1L978.7 331M978.7 331L988.4 327.2M988.4 327.2L977 322.4M977 322.4L967.3 326.1M973 328.5L982.7 324.8M972.2 324.2L983.6 329.1M967.3 322.8L978.7 327.6M978.7 327.6L988.4 323.9M988.4 323.9L977 319M977 319L967.3 322.8M967.3 321.6L978.7 326.4M978.7 326.4L988.4 322.7M988.4 322.7L977 317.8M977 317.8L967.3 321.6M973 324L983.6 324.5M983.6 324.5L982.7 320.2M982.7 320.2L972.2 319.7M972.2 319.7L973 324M967.3 319.6L978.7 324.4M978.7 324.4L988.4 320.7M988.4 320.7L977 315.9M977 315.9L967.3 319.6M967.3 316.7L978.7 321.5M978.7 321.5L988.4 317.8M988.4 317.8L977 312.9M977 312.9L967.3 316.7M973 319.1L982.7 315.3M972.2 314.8L983.6 319.6M967.3 313L978.7 317.8M978.7 317.8L988.4 314.1M988.4 314.1L977 309.2M977 309.2L967.3 313M967.3 310.1L978.7 315M978.7 315L988.4 311.2M988.4 311.2L977 306.4M977 306.4L967.3 310.1M967.3 306.7L978.7 311.6M978.7 311.6L988.4 307.8M988.4 307.8L977 303M977 303L967.3 306.7M973 309.2L982.7 305.4M972.2 304.9L983.6 309.7M967.3 302.9L978.7 307.8M978.7 307.8L988.4 304M988.4 304L977 299.2M977 299.2L967.3 302.9M967.3 300.2L978.7 305.1M978.7 305.1L988.4 301.3M988.4 301.3L977 296.5M977 296.5L967.3 300.2M967.3 296.9L978.7 301.7M978.7 301.7L988.4 298M988.4 298L977 293.1M977 293.1L967.3 296.9M973 299.3L982.7 295.6M972.2 295L983.6 299.8M967.3 295.7L978.7 300.5M978.7 300.5L988.4 296.8M988.4 296.8L977 291.9M977 291.9L967.3 295.7M973 298.1L983.6 298.6M983.6 298.6L982.7 294.4M982.7 294.4L972.2 293.8M972.2 293.8L973 298.1M967.3 293.6L978.7 298.4M978.7 298.4L988.4 294.7M988.4 294.7L977 289.8M977 289.8L967.3 293.6M967.3 289.6L978.7 294.5M978.7 294.5L988.4 290.7M988.4 290.7L977 285.9M977 285.9L967.3 289.6M967.3 286.9L978.7 291.8M978.7 291.8L988.4 288M988.4 288L977 283.2M977 283.2L967.3 286.9M973 289.3L982.7 285.6M972.2 285L983.6 289.9M967.3 283.7L978.7 288.6M978.7 288.6L988.4 284.8M988.4 284.8L977 280M977 280L967.3 283.7M967.3 279.8L978.7 284.6M978.7 284.6L988.4 280.9M988.4 280.9L977 276M977 276L967.3 279.8M967.3 277L978.7 281.9M978.7 281.9L988.4 278.2M988.4 278.2L977 273.3M977 273.3L967.3 277M973 279.5L982.7 275.7M972.2 275.2L983.6 280M967.3 273.2L978.7 278M978.7 278L988.4 274.3M988.4 274.3L977 269.4M977 269.4L967.3 273.2M969.8 272.8L969.8 252.8M979.5 269.1L979.5 249.1M969.4 271L969.4 251M980.8 275.8L980.8 255.8M976.3 275.5L976.3 255.5M986 271.8L986 251.8M975 268.8L975 248.8M986.4 273.6L986.4 253.6M867.4 497L880.3 502.5M880.3 502.5L891.5 498.2M891.5 498.2L878.6 492.7M878.6 492.7L867.4 497M867.4 389L880.3 394.5M880.3 394.5L891.5 390.2M891.5 390.2L878.6 384.7M878.6 384.7L867.4 389M867.4 497L867.4 389M880.3 502.5L880.3 394.5M891.5 498.2L891.5 390.2M878.6 492.7L878.6 384.7M868.9 496L868.9 389M878.6 492.3L878.6 385.3M874.6 498.5L874.6 391.5M884.3 494.7L884.3 387.7M873.7 494.2L873.7 387.2M885.1 499L885.1 392M880.3 500.9L880.3 393.9M890 497.1L890 390.1M868.9 494.9L880.3 499.8M880.3 499.8L890 496M890 496L878.6 491.2M878.6 491.2L868.9 494.9M874.6 497.3L884.3 493.6M873.7 493L885.1 497.9M868.9 493.7L880.3 498.6M880.3 498.6L890 494.8M890 494.8L878.6 490M878.6 490L868.9 493.7M874.6 496.1L885.1 496.7M885.1 496.7L884.3 492.4M884.3 492.4L873.7 491.8M873.7 491.8L874.6 496.1M868.9 491.5L880.3 496.3M880.3 496.3L890 492.6M890 492.6L878.6 487.7M878.6 487.7L868.9 491.5M868.9 488.1L880.3 492.9M880.3 492.9L890 489.2M890 489.2L878.6 484.3M878.6 484.3L868.9 488.1M868.9 485.1L880.3 489.9M880.3 489.9L890 486.2M890 486.2L878.6 481.3M878.6 481.3L868.9 485.1M874.6 487.5L884.3 483.8M873.7 483.2L885.1 488.1M868.9 481.6L880.3 486.5M880.3 486.5L890 482.7M890 482.7L878.6 477.9M878.6 477.9L868.9 481.6M868.9 478.9L880.3 483.8M880.3 483.8L890 480M890 480L878.6 475.2M878.6 475.2L868.9 478.9M868.9 475L880.3 479.9M880.3 479.9L890 476.1M890 476.1L878.6 471.3M878.6 471.3L868.9 475M874.6 477.5L884.3 473.7M873.7 473.2L885.1 478M868.9 471.9L880.3 476.8M880.3 476.8L890 473M890 473L878.6 468.2M878.6 468.2L868.9 471.9M868.9 468.5L880.3 473.3M880.3 473.3L890 469.6M890 469.6L878.6 464.7M878.6 464.7L868.9 468.5M868.9 467.3L880.3 472.1M880.3 472.1L890 468.4M890 468.4L878.6 463.5M878.6 463.5L868.9 467.3M874.6 469.7L885.1 470.2M885.1 470.2L884.3 466M884.3 466L873.7 465.4M873.7 465.4L874.6 469.7M868.9 465.7L880.3 470.5M880.3 470.5L890 466.8M890 466.8L878.6 461.9M878.6 461.9L868.9 465.7M874.6 468.1L884.3 464.3M873.7 463.8L885.1 468.6M868.9 461.8L880.3 466.7M880.3 466.7L890 463M890 463L878.6 458.1M878.6 458.1L868.9 461.8M868.9 458.4L880.3 463.2M880.3 463.2L890 459.5M890 459.5L878.6 454.7M878.6 454.7L868.9 458.4M868.9 455.8L880.3 460.6M880.3 460.6L890 456.9M890 456.9L878.6 452.1M878.6 452.1L868.9 455.8M874.6 458.2L884.3 454.5M873.7 453.9L885.1 458.8M868.9 452.3L880.3 457.1M880.3 457.1L890 453.4M890 453.4L878.6 448.5M878.6 448.5L868.9 452.3M868.9 448.8L880.3 453.6M880.3 453.6L890 449.9M890 449.9L878.6 445M878.6 445L868.9 448.8M868.9 445.3L880.3 450.1M880.3 450.1L890 446.4M890 446.4L878.6 441.5M878.6 441.5L868.9 445.3M874.6 447.7L884.3 444M873.7 443.4L885.1 448.3M868.9 442.5L880.3 447.3M880.3 447.3L890 443.6M890 443.6L878.6 438.7M878.6 438.7L868.9 442.5M868.9 441.3L880.3 446.1M880.3 446.1L890 442.4M890 442.4L878.6 437.5M878.6 437.5L868.9 441.3M874.6 443.7L885.1 444.2M885.1 444.2L884.3 439.9M884.3 439.9L873.7 439.4M873.7 439.4L874.6 443.7M868.9 439.2L880.3 444M880.3 444L890 440.3M890 440.3L878.6 435.5M878.6 435.5L868.9 439.2M868.9 435.8L880.3 440.7M880.3 440.7L890 436.9M890 436.9L878.6 432.1M878.6 432.1L868.9 435.8M874.6 438.3L884.3 434.5M873.7 434L885.1 438.8M868.9 432.3L880.3 437.1M880.3 437.1L890 433.4M890 433.4L878.6 428.5M878.6 428.5L868.9 432.3M868.9 428.8L880.3 433.7M880.3 433.7L890 429.9M890 429.9L878.6 425.1M878.6 425.1L868.9 428.8M868.9 425.8L880.3 430.7M880.3 430.7L890 426.9M890 426.9L878.6 422.1M878.6 422.1L868.9 425.8M874.6 428.3L884.3 424.5M873.7 424L885.1 428.8M868.9 422.6L880.3 427.4M880.3 427.4L890 423.7M890 423.7L878.6 418.8M878.6 418.8L868.9 422.6M868.9 419.2L880.3 424.1M880.3 424.1L890 420.3M890 420.3L878.6 415.5M878.6 415.5L868.9 419.2M868.9 416L880.3 420.8M880.3 420.8L890 417.1M890 417.1L878.6 412.2M878.6 412.2L868.9 416M874.6 418.4L884.3 414.6M873.7 414.1L885.1 418.9M868.9 414.8L880.3 419.6M880.3 419.6L890 415.9M890 415.9L878.6 411M878.6 411L868.9 414.8M874.6 417.2L885.1 417.7M885.1 417.7L884.3 413.4M884.3 413.4L873.7 412.9M873.7 412.9L874.6 417.2M868.9 412.6L880.3 417.5M880.3 417.5L890 413.7M890 413.7L878.6 408.9M878.6 408.9L868.9 412.6M868.9 409.6L880.3 414.4M880.3 414.4L890 410.7M890 410.7L878.6 405.8M878.6 405.8L868.9 409.6M868.9 405.9L880.3 410.8M880.3 410.8L890 407M890 407L878.6 402.2M878.6 402.2L868.9 405.9M874.6 408.4L884.3 404.6M873.7 404.1L885.1 408.9M868.9 402.3L880.3 407.1M880.3 407.1L890 403.4M890 403.4L878.6 398.5M878.6 398.5L868.9 402.3M868.9 399.4L880.3 404.3M880.3 404.3L890 400.5M890 400.5L878.6 395.7M878.6 395.7L868.9 399.4M868.9 395.8L880.3 400.7M880.3 400.7L890 397M890 397L878.6 392.1M878.6 392.1L868.9 395.8M874.6 398.3L884.3 394.5M873.7 394L885.1 398.8M868.9 393L880.3 397.9M880.3 397.9L890 394.1M890 394.1L878.6 389.3M878.6 389.3L868.9 393M1066.1 420.3L1079 425.8M1079 425.8L1090.2 421.5M1090.2 421.5L1077.3 416M1077.3 416L1066.1 420.3M1066.1 312.3L1079 317.8M1079 317.8L1090.2 313.5M1090.2 313.5L1077.3 308M1077.3 308L1066.1 312.3M1066.1 420.3L1066.1 312.3M1079 425.8L1079 317.8M1090.2 421.5L1090.2 313.5M1077.3 416L1077.3 308M1067.6 419.4L1067.6 312.4M1077.3 415.6L1077.3 308.6M1073.3 421.8L1073.3 314.8M1083 418L1083 311M1072.5 417.5L1072.5 310.5M1083.9 422.3L1083.9 315.3M1079 424.2L1079 317.2M1088.7 420.5L1088.7 313.5M1067.6 418.2L1079 423.1M1079 423.1L1088.7 419.3M1088.7 419.3L1077.3 414.5M1077.3 414.5L1067.6 418.2M1073.3 420.6L1083 416.9M1072.5 416.3L1083.9 421.2M1067.6 417L1079 421.9M1079 421.9L1088.7 418.1M1088.7 418.1L1077.3 413.3M1077.3 413.3L1067.6 417M1073.3 419.4L1083.9 420M1083.9 420L1083 415.7M1083 415.7L1072.5 415.1M1072.5 415.1L1073.3 419.4M1067.6 414.9L1079 419.7M1079 419.7L1088.7 416M1088.7 416L1077.3 411.1M1077.3 411.1L1067.6 414.9M1067.6 411.6L1079 416.5M1079 416.5L1088.7 412.7M1088.7 412.7L1077.3 407.9M1077.3 407.9L1067.6 411.6M1067.6 408.5L1079 413.3M1079 413.3L1088.7 409.6M1088.7 409.6L1077.3 404.7M1077.3 404.7L1067.6 408.5M1073.3 410.9L1083 407.1M1072.5 406.6L1083.9 411.4M1067.6 405.2L1079 410M1079 410L1088.7 406.3M1088.7 406.3L1077.3 401.4M1077.3 401.4L1067.6 405.2M1067.6 401.8L1079 406.6M1079 406.6L1088.7 402.9M1088.7 402.9L1077.3 398M1077.3 398L1067.6 401.8M1067.6 398.2L1079 403.1M1079 403.1L1088.7 399.4M1088.7 399.4L1077.3 394.5M1077.3 394.5L1067.6 398.2M1073.3 400.7L1083 396.9M1072.5 396.4L1083.9 401.2M1067.6 395.5L1079 400.4M1079 400.4L1088.7 396.6M1088.7 396.6L1077.3 391.8M1077.3 391.8L1067.6 395.5M1067.6 392.3L1079 397.1M1079 397.1L1088.7 393.4M1088.7 393.4L1077.3 388.5M1077.3 388.5L1067.6 392.3M1067.6 391.1L1079 395.9M1079 395.9L1088.7 392.2M1088.7 392.2L1077.3 387.3M1077.3 387.3L1067.6 391.1M1073.3 393.5L1083.9 394.1M1083.9 394.1L1083 389.8M1083 389.8L1072.5 389.2M1072.5 389.2L1073.3 393.5M1067.6 388.5L1079 393.3M1079 393.3L1088.7 389.6M1088.7 389.6L1077.3 384.7M1077.3 384.7L1067.6 388.5M1073.3 390.9L1083 387.1M1072.5 386.6L1083.9 391.4M1067.6 385L1079 389.9M1079 389.9L1088.7 386.1M1088.7 386.1L1077.3 381.3M1077.3 381.3L1067.6 385M1067.6 382.1L1079 386.9M1079 386.9L1088.7 383.2M1088.7 383.2L1077.3 378.3M1077.3 378.3L1067.6 382.1M1067.6 378.8L1079 383.7M1079 383.7L1088.7 379.9M1088.7 379.9L1077.3 375.1M1077.3 375.1L1067.6 378.8M1073.3 381.2L1083 377.5M1072.5 376.9L1083.9 381.8M1067.6 375.3L1079 380.1M1079 380.1L1088.7 376.4M1088.7 376.4L1077.3 371.5M1077.3 371.5L1067.6 375.3M1067.6 372.4L1079 377.3M1079 377.3L1088.7 373.5M1088.7 373.5L1077.3 368.7M1077.3 368.7L1067.6 372.4M1067.6 369.1L1079 373.9M1079 373.9L1088.7 370.2M1088.7 370.2L1077.3 365.3M1077.3 365.3L1067.6 369.1M1073.3 371.5L1083 367.7M1072.5 367.2L1083.9 372M1067.6 365.8L1079 370.7M1079 370.7L1088.7 366.9M1088.7 366.9L1077.3 362.1M1077.3 362.1L1067.6 365.8M1067.6 364.6L1079 369.5M1079 369.5L1088.7 365.7M1088.7 365.7L1077.3 360.9M1077.3 360.9L1067.6 364.6M1073.3 367L1083.9 367.6M1083.9 367.6L1083 363.3M1083 363.3L1072.5 362.7M1072.5 362.7L1073.3 367M1067.6 362.2L1079 367M1079 367L1088.7 363.3M1088.7 363.3L1077.3 358.5M1077.3 358.5L1067.6 362.2M1067.6 359.1L1079 364M1079 364L1088.7 360.2M1088.7 360.2L1077.3 355.4M1077.3 355.4L1067.6 359.1M1073.3 361.5L1083 357.8M1072.5 357.2L1083.9 362.1M1067.6 355.9L1079 360.7M1079 360.7L1088.7 357M1088.7 357L1077.3 352.1M1077.3 352.1L1067.6 355.9M1067.6 352.2L1079 357.1M1079 357.1L1088.7 353.3M1088.7 353.3L1077.3 348.5M1077.3 348.5L1067.6 352.2M1067.6 348.7L1079 353.6M1079 353.6L1088.7 349.8M1088.7 349.8L1077.3 345M1077.3 345L1067.6 348.7M1073.3 351.1L1083 347.4M1072.5 346.8L1083.9 351.7M1067.6 345.9L1079 350.8M1079 350.8L1088.7 347M1088.7 347L1077.3 342.2M1077.3 342.2L1067.6 345.9M1067.6 342.3L1079 347.1M1079 347.1L1088.7 343.4M1088.7 343.4L1077.3 338.6M1077.3 338.6L1067.6 342.3M1067.6 339.2L1079 344.1M1079 344.1L1088.7 340.3M1088.7 340.3L1077.3 335.5M1077.3 335.5L1067.6 339.2M1073.3 341.7L1083 337.9M1072.5 337.4L1083.9 342.2M1067.6 338L1079 342.9M1079 342.9L1088.7 339.1M1088.7 339.1L1077.3 334.3M1077.3 334.3L1067.6 338M1073.3 340.5L1083.9 341M1083.9 341L1083 336.7M1083 336.7L1072.5 336.2M1072.5 336.2L1073.3 340.5M1067.6 335.6L1079 340.4M1079 340.4L1088.7 336.7M1088.7 336.7L1077.3 331.8M1077.3 331.8L1067.6 335.6M1067.6 332.5L1079 337.3M1079 337.3L1088.7 333.6M1088.7 333.6L1077.3 328.8M1077.3 328.8L1067.6 332.5M1067.6 329.5L1079 334.3M1079 334.3L1088.7 330.6M1088.7 330.6L1077.3 325.7M1077.3 325.7L1067.6 329.5M1073.3 331.9L1083 328.1M1072.5 327.6L1083.9 332.4M1067.6 326.2L1079 331M1079 331L1088.7 327.3M1088.7 327.3L1077.3 322.4M1077.3 322.4L1067.6 326.2M1067.6 323L1079 327.9M1079 327.9L1088.7 324.2M1088.7 324.2L1077.3 319.3M1077.3 319.3L1067.6 323M1067.6 319.4L1079 324.2M1079 324.2L1088.7 320.5M1088.7 320.5L1077.3 315.6M1077.3 315.6L1067.6 319.4M1073.3 321.8L1083 318.1M1072.5 317.5L1083.9 322.4M1067.6 316.2L1079 321M1079 321L1088.7 317.3M1088.7 317.3L1077.3 312.4M1077.3 312.4L1067.6 316.2" fill="none" stroke="#111" stroke-width="1"/>
<path d="M471.2 567.8L511.7 585M511.7 585L552.7 569.2M552.7 569.2L512.3 552M512.3 552L471.2 567.8M471.2 559.3L511.7 576.5M511.7 576.5L552.7 560.7M552.7 560.7L512.3 543.5M512.3 543.5L471.2 559.3M471.2 567.8L471.2 559.3M511.7 585L511.7 576.5M552.7 569.2L552.7 560.7M512.3 552L512.3 543.5M474.9 561.2L513.2 546.5M474.9 560.5L512.6 576.5M475.8 561.6L514.1 546.9M475.8 560.1L513.6 576.2M480.9 563.8L519.1 549M481 558.1L518.7 574.2M481.8 564.2L520.1 549.4M481.9 557.8L519.6 573.8M486.9 566.3L525.1 551.6M487 555.8L524.8 571.8M487.8 566.7L526 552M488 555.4L525.7 571.5M492.8 568.9L531.1 554.1M493.1 553.5L530.8 569.5M493.8 569.3L532 554.5M494 553.1L531.8 569.1M498.8 571.4L537.1 556.6M499.2 551.1L536.9 567.2M499.7 571.8L538 557M500.1 550.8L537.8 566.8M504.8 573.9L543.1 559.2M505.2 548.8L543 564.8M505.7 574.3L544 559.6M506.2 548.4L543.9 564.5M510.8 576.5L549 561.7M511.3 546.4L549 562.5M511.7 576.9L550 562.1M512.2 546.1L550 562.1M474.9 566.7L513.2 552M474.9 566L512.6 582M480.9 569.3L519.1 554.5M481 563.6L518.7 579.7M486.9 571.8L525.1 557.1M487 561.3L524.8 577.3M492.8 574.4L531.1 559.6M493.1 559L530.8 575M498.8 576.9L537.1 562.1M499.2 556.6L536.9 572.7M504.8 579.4L543.1 564.7M505.2 554.3L543 570.3M510.8 582L549 567.2M511.3 551.9L549 568M474.9 561.2L474.9 566.7M474.9 560.5L474.9 566M513.2 546.5L513.2 552M512.6 576.5L512.6 582M480.9 563.8L480.9 569.3M481 558.1L481 563.6M519.1 549L519.1 554.5M518.7 574.2L518.7 579.7M486.9 566.3L486.9 571.8M487 555.8L487 561.3M525.1 551.6L525.1 557.1M524.8 571.8L524.8 577.3M492.8 568.9L492.8 574.4M493.1 553.5L493.1 559M531.1 554.1L531.1 559.6M530.8 569.5L530.8 575M498.8 571.4L498.8 576.9M499.2 551.1L499.2 556.6M537.1 556.6L537.1 562.1M536.9 567.2L536.9 572.7M504.8 573.9L504.8 579.4M505.2 548.8L505.2 554.3M543.1 559.2L543.1 564.7M543 564.8L543 570.3M510.8 576.5L510.8 582M511.3 546.4L511.3 551.9M549 561.7L549 567.2M549 562.5L549 568M499.9 566.8L511.9 571.9M511.9 571.9L524 567.2M524 567.2L512.1 562.1M512.1 562.1L499.9 566.8M499.9 451.8L511.9 456.9M511.9 456.9L524 452.2M524 452.2L512.1 447.1M512.1 447.1L499.9 451.8M499.9 566.8L499.9 451.8M511.9 571.9L511.9 456.9M524 567.2L524 452.2M512.1 562.1L512.1 447.1M501.4 565.8L501.4 437.8M512 561.7L512 433.7M504.9 567.3L504.9 439.3M515.5 563.2L515.5 435.2M504.9 564.4L504.9 436.4M515.4 568.9L515.4 440.9M508.4 568.8L508.4 440.8M519 564.7L519 436.7M508.5 563.1L508.5 435.1M519 567.5L519 439.5M511.9 570.3L511.9 442.3M522.5 566.2L522.5 438.2M501.4 565.1L511.9 569.5M511.9 569.5L522.5 565.4M522.5 565.4L512 561M512 561L501.4 565.1M506.6 567.3L517.3 563.2M506.7 563L517.2 567.5M501.4 563.9L511.9 568.3M511.9 568.3L522.5 564.2M522.5 564.2L512 559.8M512 559.8L501.4 563.9M506.6 566.1L517.2 566.3M517.2 566.3L517.3 562M517.3 562L506.7 561.8M506.7 561.8L506.6 566.1M501.4 561.6L511.9 566.1M511.9 566.1L522.5 562M522.5 562L512 557.5M512 557.5L501.4 561.6M501.4 558.3L511.9 562.8M511.9 562.8L522.5 558.7M522.5 558.7L512 554.2M512 554.2L501.4 558.3M501.4 554.7L511.9 559.1M511.9 559.1L522.5 555M522.5 555L512 550.6M512 550.6L501.4 554.7M506.6 556.9L517.3 552.8M506.7 552.6L517.2 557.1M501.4 551.9L511.9 556.3M511.9 556.3L522.5 552.2M522.5 552.2L512 547.8M512 547.8L501.4 551.9M501.4 547.9L511.9 552.4M511.9 552.4L522.5 548.3M522.5 548.3L512 543.8M512 543.8L501.4 547.9M501.4 545L511.9 549.5M511.9 549.5L522.5 545.4M522.5 545.4L512 540.9M512 540.9L501.4 545M506.6 547.3L517.3 543.1M506.7 543L517.2 547.4M501.4 541.6L511.9 546.1M511.9 546.1L522.5 542M522.5 542L512 537.5M512 537.5L501.4 541.6M501.4 538.4L511.9 542.9M511.9 542.9L522.5 538.8M522.5 538.8L512 534.3M512 534.3L501.4 538.4M501.4 534.8L511.9 539.3M511.9 539.3L522.5 535.2M522.5 535.2L512 530.7M512 530.7L501.4 534.8M506.6 537.1L517.3 533M506.7 532.8L517.2 537.2M501.4 533.6L511.9 538.1M511.9 538.1L522.5 534M522.5 534L512 529.5M512 529.5L501.4 533.6M506.6 535.9L517.2 536M517.2 536L517.3 531.8M517.3 531.8L506.7 531.6M506.7 531.6L506.6 535.9M501.4 531.5L511.9 536M511.9 536L522.5 531.9M522.5 531.9L512 527.4M512 527.4L501.4 531.5M501.4 528.5L511.9 532.9M511.9 532.9L522.5 528.8M522.5 528.8L512 524.4M512 524.4L501.4 528.5M501.4 525.2L511.9 529.7M511.9 529.7L522.5 525.6M522.5 525.6L512 521.1M512 521.1L501.4 525.2M506.6 527.4L517.3 523.3M506.7 523.2L517.2 527.6M501.4 521.7L511.9 526.2M511.9 526.2L522.5 522.1M522.5 522.1L512 517.6M512 517.6L501.4 521.7M501.4 518.3L511.9 522.8M511.9 522.8L522.5 518.7M522.5 518.7L512 514.2M512 514.2L501.4 518.3M501.4 515.4L511.9 519.8M511.9 519.8L522.5 515.7M522.5 515.7L512 511.3M512 511.3L501.4 515.4M506.6 517.6L517.3 513.5M506.7 513.3L517.2 517.8M501.4 511.8L511.9 516.3M511.9 516.3L522.5 512.2M522.5 512.2L512 507.7M512 507.7L501.4 511.8M501.4 508.3L511.9 512.8M511.9 512.8L522.5 508.7M522.5 508.7L512 504.2M512 504.2L501.4 508.3M501.4 507.1L511.9 511.6M511.9 511.6L522.5 507.5M522.5 507.5L512 503M512 503L501.4 507.1M506.6 509.4L517.2 509.5M517.2 509.5L517.3 505.3M517.3 505.3L506.7 505.1M506.7 505.1L506.6 509.4M501.4 505.4L511.9 509.9M511.9 509.9L522.5 505.8M522.5 505.8L512 501.3M512 501.3L501.4 505.4M506.6 507.7L517.3 503.6M506.7 503.4L517.2 507.8M501.4 502.3L511.9 506.8M511.9 506.8L522.5 502.7M522.5 502.7L512 498.2M512 498.2L501.4 502.3M501.4 499L511.9 503.5M511.9 503.5L522.5 499.4M522.5 499.4L512 494.9M512 494.9L501.4 499M501.4 495.3L511.9 499.8M511.9 499.8L522.5 495.7M522.5 495.7L512 491.2M512 491.2L501.4 495.3M506.6 497.6L517.3 493.5M506.7 493.3L517.2 497.7M501.4 492.1L511.9 496.5M511.9 496.5L522.5 492.4M522.5 492.4L512 488M512 488L501.4 492.1M501.4 488.5L511.9 493M511.9 493L522.5 488.9M522.5 488.9L512 484.4M512 484.4L501.4 488.5M501.4 485.3L511.9 489.8M511.9 489.8L522.5 485.7M522.5 485.7L512 481.2M512 481.2L501.4 485.3M506.6 487.6L517.3 483.4M506.7 483.3L517.2 487.7M501.4 482.5L511.9 487M511.9 487L522.5 482.9M522.5 482.9L512 478.4M512 478.4L501.4 482.5M501.4 479.3L511.9 483.7M511.9 483.7L522.5 479.6M522.5 479.6L512 475.1M512 475.1L501.4 479.3M501.4 478.1L511.9 482.5M511.9 482.5L522.5 478.4M522.5 478.4L512 473.9M512 473.9L501.4 478.1M506.6 480.3L517.2 480.5M517.2 480.5L517.3 476.2M517.3 476.2L506.7 476M506.7 476L506.6 480.3M501.4 475.9L511.9 480.4M511.9 480.4L522.5 476.3M522.5 476.3L512 471.8M512 471.8L501.4 475.9M506.6 478.1L517.3 474M506.7 473.8L517.2 478.3M501.4 472.7L511.9 477.1M511.9 477.1L522.5 473M522.5 473L512 468.6M512 468.6L501.4 472.7M501.4 468.9L511.9 473.4M511.9 473.4L522.5 469.3M522.5 469.3L512 464.8M512 464.8L501.4 468.9M501.4 465.5L511.9 470M511.9 470L522.5 465.9M522.5 465.9L512 461.4M512 461.4L501.4 465.5M506.6 467.7L517.3 463.6M506.7 463.5L517.2 467.9M501.4 462.2L511.9 466.6M511.9 466.6L522.5 462.5M522.5 462.5L512 458.1M512 458.1L501.4 462.2M501.4 459.4L511.9 463.9M511.9 463.9L522.5 459.8M522.5 459.8L512 455.3M512 455.3L501.4 459.4M501.4 455.6L511.9 460.1M511.9 460.1L522.5 456M522.5 456L512 451.5M512 451.5L501.4 455.6M506.6 457.8L517.3 453.7M506.7 453.6L517.2 458.0" fill="none" stroke="#111" stroke-width="1"/>
<path d="M576.2 527.5L616.7 544.7M616.7 544.7L657.7 528.9M657.7 528.9L617.3 511.7M617.3 511.7L576.2 527.5M576.2 519L616.7 536.2M616.7 536.2L657.7 520.4M657.7 520.4L617.3 503.2M617.3 503.2L576.2 519M576.2 527.5L576.2 519M616.7 544.7L616.7 536.2M657.7 528.9L657.7 520.4M617.3 511.7L617.3 503.2M579.9 520.9L618.2 506.2M579.9 520.2L617.6 536.2M580.8 521.3L619.1 506.6M580.8 519.8L618.6 535.9M585.9 523.5L624.1 508.7M586 517.8L623.7 533.9M586.8 523.9L625.1 509.1M586.9 517.5L624.6 533.5M591.9 526L630.1 511.3M592 515.5L629.8 531.5M592.8 526.4L631 511.7M593 515.1L630.7 531.2M597.8 528.6L636.1 513.8M598.1 513.2L635.8 529.2M598.8 529L637 514.2M599 512.8L636.8 528.8M603.8 531.1L642.1 516.3M604.2 510.8L641.9 526.9M604.7 531.5L643 516.7M605.1 510.5L642.8 526.5M609.8 533.6L648.1 518.9M610.2 508.5L648 524.5M610.7 534L649 519.3M611.2 508.1L648.9 524.2M615.8 536.2L654 521.4M616.3 506.1L654 522.2M616.7 536.6L655 521.8M617.2 505.8L655 521.8M579.9 526.4L618.2 511.7M579.9 525.7L617.6 541.7M585.9 529L624.1 514.2M586 523.3L623.7 539.4M591.9 531.5L630.1 516.8M592 521L629.8 537M597.8 534.1L636.1 519.3M598.1 518.7L635.8 534.7M603.8 536.6L642.1 521.8M604.2 516.3L641.9 532.4M609.8 539.1L648.1 524.4M610.2 514L648 530M615.8 541.7L654 526.9M616.3 511.6L654 527.7M579.9 520.9L579.9 526.4M579.9 520.2L579.9 525.7M618.2 506.2L618.2 511.7M617.6 536.2L617.6 541.7M585.9 523.5L585.9 529M586 517.8L586 523.3M624.1 508.7L624.1 514.2M623.7 533.9L623.7 539.4M591.9 526L591.9 531.5M592 515.5L592 521M630.1 511.3L630.1 516.8M629.8 531.5L629.8 537M597.8 528.6L597.8 534.1M598.1 513.2L598.1 518.7M636.1 513.8L636.1 519.3M635.8 529.2L635.8 534.7M603.8 531.1L603.8 536.6M604.2 510.8L604.2 516.3M642.1 516.3L642.1 521.8M641.9 526.9L641.9 532.4M609.8 533.6L609.8 539.1M610.2 508.5L610.2 514M648.1 518.9L648.1 524.4M648 524.5L648 530M615.8 536.2L615.8 541.7M616.3 506.1L616.3 511.6M654 521.4L654 526.9M654 522.2L654 527.7M604.9 526.5L616.9 531.6M616.9 531.6L629 526.9M629 526.9L617.1 521.8M617.1 521.8L604.9 526.5M604.9 411.5L616.9 416.6M616.9 416.6L629 411.9M629 411.9L617.1 406.8M617.1 406.8L604.9 411.5M604.9 526.5L604.9 411.5M616.9 531.6L616.9 416.6M629 526.9L629 411.9M617.1 521.8L617.1 406.8M606.4 525.5L606.4 396.5M617 521.4L617 392.4M609.9 527L609.9 398M620.5 522.9L620.5 393.9M609.9 524.1L609.9 395.1M620.4 528.6L620.4 399.6M613.4 528.5L613.4 399.5M624 524.4L624 395.4M613.5 522.8L613.5 393.8M624 527.2L624 398.2M616.9 530L616.9 401M627.5 525.9L627.5 396.9M606.4 524.7L616.9 529.1M616.9 529.1L627.5 525M627.5 525L617 520.6M617 520.6L606.4 524.7M611.6 526.9L622.3 522.8M611.7 522.6L622.2 527.1M606.4 523.5L616.9 527.9M616.9 527.9L627.5 523.8M627.5 523.8L617 519.4M617 519.4L606.4 523.5M611.6 525.7L622.2 525.9M622.2 525.9L622.3 521.6M622.3 521.6L611.7 521.4M611.7 521.4L611.6 525.7M606.4 521.3L616.9 525.7M616.9 525.7L627.5 521.6M627.5 521.6L617 517.2M617 517.2L606.4 521.3M606.4 517.7L616.9 522.2M616.9 522.2L627.5 518.1M627.5 518.1L617 513.6M617 513.6L606.4 517.7M606.4 514.9L616.9 519.4M616.9 519.4L627.5 515.3M627.5 515.3L617 510.8M617 510.8L606.4 514.9M611.6 517.2L622.3 513.1M611.7 512.9L622.2 517.3M606.4 511.6L616.9 516.1M616.9 516.1L627.5 512M627.5 512L617 507.5M617 507.5L606.4 511.6M606.4 507.7L616.9 512.2M616.9 512.2L627.5 508.1M627.5 508.1L617 503.6M617 503.6L606.4 507.7M606.4 504.9L616.9 509.3M616.9 509.3L627.5 505.2M627.5 505.2L617 500.8M617 500.8L606.4 504.9M611.6 507.1L622.3 503M611.7 502.8L622.2 507.3M606.4 501.5L616.9 506M616.9 506L627.5 501.9M627.5 501.9L617 497.4M617 497.4L606.4 501.5M606.4 498L616.9 502.5M616.9 502.5L627.5 498.4M627.5 498.4L617 493.9M617 493.9L606.4 498M606.4 494.7L616.9 499.1M616.9 499.1L627.5 495M627.5 495L617 490.6M617 490.6L606.4 494.7M611.6 496.9L622.3 492.8M611.7 492.6L622.2 497.1M606.4 493.5L616.9 497.9M616.9 497.9L627.5 493.8M627.5 493.8L617 489.4M617 489.4L606.4 493.5M611.6 495.7L622.2 495.9M622.2 495.9L622.3 491.6M622.3 491.6L611.7 491.4M611.7 491.4L611.6 495.7M606.4 491.9L616.9 496.4M616.9 496.4L627.5 492.3M627.5 492.3L617 487.8M617 487.8L606.4 491.9M606.4 488.3L616.9 492.8M616.9 492.8L627.5 488.7M627.5 488.7L617 484.2M617 484.2L606.4 488.3M606.4 485L616.9 489.4M616.9 489.4L627.5 485.3M627.5 485.3L617 480.9M617 480.9L606.4 485M611.6 487.2L622.3 483.1M611.7 482.9L622.2 487.4M606.4 481.6L616.9 486.1M616.9 486.1L627.5 482M627.5 482L617 477.5M617 477.5L606.4 481.6M606.4 478.5L616.9 483M616.9 483L627.5 478.9M627.5 478.9L617 474.4M617 474.4L606.4 478.5M606.4 474.9L616.9 479.4M616.9 479.4L627.5 475.3M627.5 475.3L617 470.8M617 470.8L606.4 474.9M611.6 477.2L622.3 473.1M611.7 472.9L622.2 477.3M606.4 471.3L616.9 475.8M616.9 475.8L627.5 471.7M627.5 471.7L617 467.2M617 467.2L606.4 471.3M606.4 468.5L616.9 472.9M616.9 472.9L627.5 468.8M627.5 468.8L617 464.4M617 464.4L606.4 468.5M606.4 467.3L616.9 471.7M616.9 471.7L627.5 467.6M627.5 467.6L617 463.2M617 463.2L606.4 467.3M611.6 469.5L622.2 469.7M622.2 469.7L622.3 465.4M622.3 465.4L611.7 465.2M611.7 465.2L611.6 469.5M606.4 465.1L616.9 469.5M616.9 469.5L627.5 465.4M627.5 465.4L617 461M617 461L606.4 465.1M611.6 467.3L622.3 463.2M611.7 463L622.2 467.5M606.4 462.1L616.9 466.6M616.9 466.6L627.5 462.5M627.5 462.5L617 458M617 458L606.4 462.1M606.4 458.7L616.9 463.1M616.9 463.1L627.5 459M627.5 459L617 454.6M617 454.6L606.4 458.7M606.4 455.1L616.9 459.5M616.9 459.5L627.5 455.4M627.5 455.4L617 451M617 451L606.4 455.1M611.6 457.3L622.3 453.2M611.7 453L622.2 457.5M606.4 452.2L616.9 456.7M616.9 456.7L627.5 452.6M627.5 452.6L617 448.1M617 448.1L606.4 452.2M606.4 448.3L616.9 452.8M616.9 452.8L627.5 448.6M627.5 448.6L617 444.2M617 444.2L606.4 448.3M606.4 445L616.9 449.4M616.9 449.4L627.5 445.3M627.5 445.3L617 440.9M617 440.9L606.4 445M611.6 447.2L622.3 443.1M611.7 442.9L622.2 447.4M606.4 442.3L616.9 446.8M616.9 446.8L627.5 442.7M627.5 442.7L617 438.2M617 438.2L606.4 442.3M606.4 438.4L616.9 442.8M616.9 442.8L627.5 438.7M627.5 438.7L617 434.2M617 434.2L606.4 438.4M606.4 437.2L616.9 441.6M616.9 441.6L627.5 437.5M627.5 437.5L617 433M617 433L606.4 437.2M611.6 439.4L622.2 439.6M622.2 439.6L622.3 435.3M622.3 435.3L611.7 435.1M611.7 435.1L611.6 439.4M606.4 435.5L616.9 440M616.9 440L627.5 435.9M627.5 435.9L617 431.4M617 431.4L606.4 435.5M611.6 437.7L622.3 433.6M611.7 433.5L622.2 437.9M606.4 431.9L616.9 436.3M616.9 436.3L627.5 432.2M627.5 432.2L617 427.8M617 427.8L606.4 431.9M606.4 428.6L616.9 433.1M616.9 433.1L627.5 429M627.5 429L617 424.5M617 424.5L606.4 428.6M606.4 425.7L616.9 430.1M616.9 430.1L627.5 426M627.5 426L617 421.6M617 421.6L606.4 425.7M611.6 427.9L622.3 423.8M611.7 423.6L622.2 428.1M606.4 422.1L616.9 426.5M616.9 426.5L627.5 422.4M627.5 422.4L617 418M617 418L606.4 422.1M606.4 418.8L616.9 423.2M616.9 423.2L627.5 419.1M627.5 419.1L617 414.7M617 414.7L606.4 418.8M606.4 415.4L616.9 419.8M616.9 419.8L627.5 415.7M627.5 415.7L617 411.3M617 411.3L606.4 415.4M611.6 417.6L622.3 413.5M611.7 413.3L622.2 417.8" fill="none" stroke="#111" stroke-width="1"/>
</svg>

<!--STATUS-->
<div id="status"></div>
<div class="t" style="left:3px;top:687px;letter-spacing:-0.31px">Click to select, TAB for alternates, CTRL adds, SHIFT unselects.</div>
<div class="abs" style="left:377px;top:685px;width:204px;height:18px;background:#fff"></div>
<div class="abs" style="left:693px;top:685px;width:204px;height:18px;background:#fff"></div>
<div class="t" style="left:696px;top:687px;color:#7d838a;letter-spacing:0.05px">Main Model</div>
<div class="t" style="left:610px;top:688px">:0</div>
<div class="t" style="left:1295px;top:688px">:0</div>
<svg width="1366" height="703" viewBox="0 0 1366 703" style="left:0;top:0;pointer-events:none">
<path d="M569.500 691.500 L573.500 695.500 L577.500 691.500 M885.500 691.500 L889.500 695.500 L893.500 691.500" fill="none" stroke="#8a8a8a" stroke-width="1.100"/>
<!-- workset icon -->
<g fill="#bdbdbd" stroke="#999" stroke-width="0.800"><rect x="358.500" y="686.500" width="6" height="6" rx="1"/><rect x="354.500" y="692.500" width="6" height="8.500" rx="1.500"/><rect x="362.500" y="692.500" width="6" height="8.500" rx="1.500"/></g>
<!-- editing requests -->
<path d="M594 687.500 H604 V692 H598.500 L596.500 697 H601 V701 H591.500 L594 694 Z" fill="#b8b8b8" stroke="#999" stroke-width="0.800" stroke-linejoin="round"/><path d="M595.500 689.500 H602.500" stroke="#eee" stroke-width="1.400"/>
<!-- design options -->
<rect x="643.500" y="686.500" width="15" height="14.500" rx="1.500" fill="#fff" stroke="#222" stroke-width="1.300"/><path d="M644 688.500 H658" stroke="#222" stroke-width="1.600"/>
<path d="M646 692 H648 M650 692 H656 M648.500 695.500 H650 M652 695.500 H656 M648.500 698.500 H650 M652 698.500 H656" stroke="#222" stroke-width="1.300"/>
<rect x="670" y="686" width="14" height="13" fill="#b4b4b4"/><path d="M669 694.500 H677 M674 691.500 L677.500 694.500 L674 697.500 M672 700.500 H685 V690" stroke="#eee" stroke-width="1.200" fill="none"/>
<!-- right icons -->
<path d="M1127 690 Q1127 687.500 1130 687.500 Q1133 687.500 1133 690 Q1133 692.500 1130 692.500 Q1127 692.500 1127 690 Z M1133 690 Q1133 687.500 1136.500 687.500 Q1140 687.500 1140 690 Q1140 692.500 1136.500 692.500 Q1133 692.500 1133 690 Z" fill="none" stroke="#e09a1a" stroke-width="1.700"/>
<g id="cur"><path d="M1131.500 690 V700 L1133.800 698 L1135.300 701.500 L1137 700.800 L1135.500 697.300 L1138.500 697 Z" fill="#fff" stroke="#333" stroke-width="0.900" stroke-linejoin="round"/></g>
<path d="M1152 699.500 L1161 692.500 M1152 699.500 H1161 M1154 696.500 H1162 M1156 694 H1163" stroke="#0a64c8" stroke-width="1.100"/>
<path d="M1161.500 686.500 L1166.500 691.500 M1166.500 686.500 L1161.500 691.500" stroke="#d0581a" stroke-width="1.700"/>
<use href="#cur" x="28" y="0"/>
<path d="M1178.500 687 H1187.500 V689.500 H1185.500 V693 H1188 V695 H1178 V693 H1180.500 V689.500 H1178.500 Z" fill="#f4b860" stroke="#c47a14" stroke-width="0.900"/><path d="M1183 695 V701" stroke="#555" stroke-width="1.100"/>
<use href="#cur" x="55" y="0"/>
<path d="M1204.500 690 L1210 687.500 V699 L1204.500 701 Z" fill="#cfe3f5" stroke="#0a64c8" stroke-width="1.100"/>
<path d="M1213.500 686.500 L1218.500 691.500 M1218.500 686.500 L1213.500 691.500" stroke="#d0581a" stroke-width="1.700"/>
<use href="#cur" x="81" y="0"/>
<path d="M1233 687 V696 M1228.500 691.500 H1237.500 M1231.500 688.500 L1233 687 L1234.500 688.500 M1230 690 L1228.500 691.500 L1230 693 M1236 690 L1237.500 691.500 L1236 693" stroke="#222" stroke-width="1" fill="none"/>
<use href="#cur" x="106" y="0"/>
<circle cx="1262" cy="693.500" r="5.500" fill="none" stroke="#c2c2c2" stroke-width="2.600" stroke-dasharray="2.200 1.200"/>
<path d="M1278.500 687.500 H1293.500 L1288 694.500 V700.500 L1284 699 V694.500 Z" fill="#d4d4d4" stroke="#333" stroke-width="1.100" stroke-linejoin="round"/>
</svg>

</body></html>
